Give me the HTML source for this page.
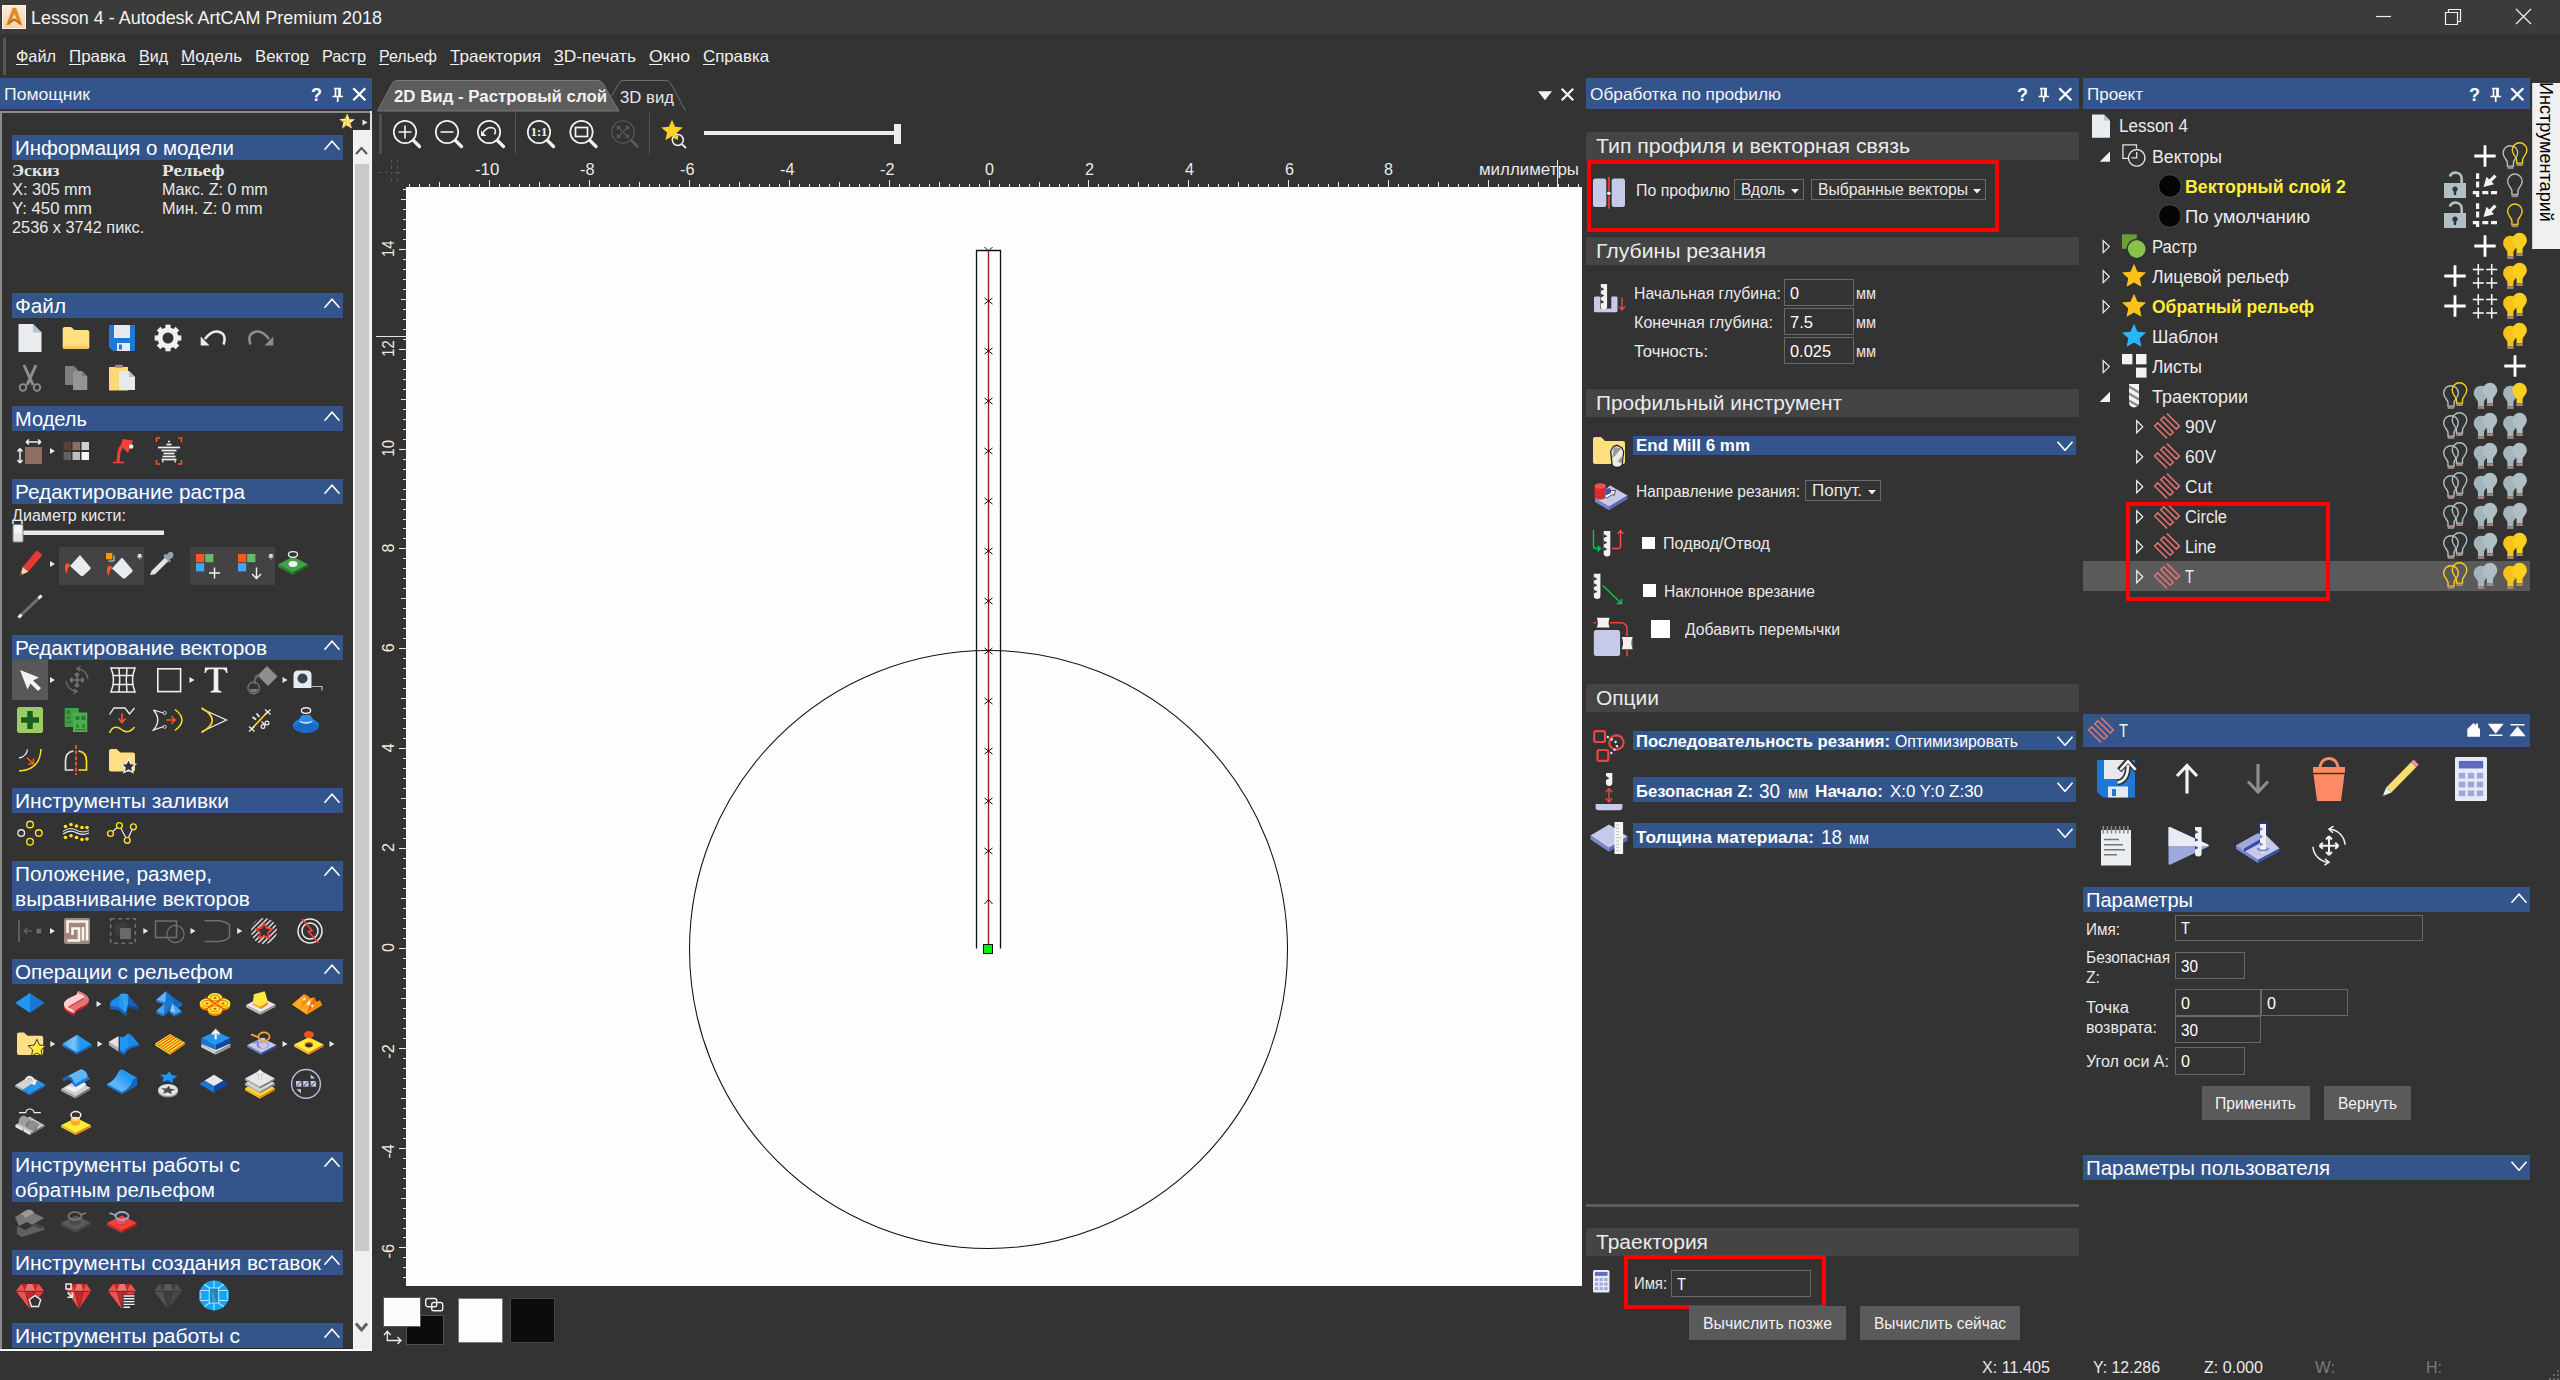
<!DOCTYPE html>
<html><head><meta charset="utf-8"><title>Lesson 4 - Autodesk ArtCAM Premium 2018</title><style>
html,body{margin:0;padding:0;}
body{width:2560px;height:1380px;overflow:hidden;background:#333333;position:relative;font-family:"Liberation Sans",sans-serif;}
.a{position:absolute;display:block;}
.t{position:absolute;white-space:nowrap;line-height:1;transform-origin:0 50%;font-family:"Liberation Sans",sans-serif;}
u{text-decoration-thickness:1px;text-underline-offset:1.5px;}
</style></head>
<body>
<div class="a" style="left:0px;top:0px;width:2560px;height:34px;background:#3b3b3b;"></div>
<svg class="a" style="left:2px;top:5px;" width="24" height="24" viewBox="0 0 24 24"><defs><linearGradient id="gai" x1="0" y1="0" x2="0" y2="1"><stop offset="0" stop-color="#fbe9d6"/><stop offset="1" stop-color="#f6d2ae"/></linearGradient></defs><rect x="0" y="0" width="24" height="24" fill="#fdf3e8"/><rect x="1" y="1" width="22" height="22" fill="url(#gai)"/><path d="M4 20.5 L10.8 2.8 L14 2.8 L20.5 20.5 L16.5 19.3 L12.3 8.5 L8 19.5 Z" fill="#e08a25"/><path d="M6.5 17 L12.2 13.3 L18 17 L18.5 19.5 L12.2 15.8 L6 19.5Z" fill="#b9661a"/></svg>
<span id="t1" class="t" style="left:31px;top:8.57px;font-size:18.7px;color:#f4f4f4;transform:scaleX(0.9600);">Lesson 4 - Autodesk ArtCAM Premium 2018</span>
<svg class="a" style="left:2375px;top:8px;" width="170" height="18" viewBox="0 0 170 18"><path d="M1 8.5 H16" stroke="#eee" stroke-width="1.2"/><path d="M70.5 4.5 H82.5 V16.5 H70.5Z M73.5 4.5 V1.5 H85.5 V13.5 H82.5" stroke="#eee" stroke-width="1.2" fill="none"/><path d="M141 1 L156 16 M156 1 L141 16" stroke="#eee" stroke-width="1.3"/></svg>
<div class="a" style="left:3px;top:38px;width:3px;height:37px;background:#555;"></div>
<span id="t2" class="t" style="left:16px;top:47.94px;font-size:16.5px;color:#f0f0f0;transform:scaleX(0.9858);"><u>Ф</u>айл</span>
<span id="t3" class="t" style="left:69px;top:47.94px;font-size:16.5px;color:#f0f0f0;transform:scaleX(1.0224);"><u>П</u>равка</span>
<span id="t4" class="t" style="left:139px;top:47.94px;font-size:16.5px;color:#f0f0f0;transform:scaleX(0.9707);"><u>В</u>ид</span>
<span id="t5" class="t" style="left:181px;top:47.94px;font-size:16.5px;color:#f0f0f0;transform:scaleX(1.0298);"><u>М</u>одель</span>
<span id="t6" class="t" style="left:255px;top:47.94px;font-size:16.5px;color:#f0f0f0;transform:scaleX(1.0126);">Векто<u>р</u></span>
<span id="t7" class="t" style="left:322px;top:47.94px;font-size:16.5px;color:#f0f0f0;transform:scaleX(0.9856);">Раст<u>р</u></span>
<span id="t8" class="t" style="left:379px;top:47.94px;font-size:16.5px;color:#f0f0f0;transform:scaleX(0.9684);"><u>Р</u>ельеф</span>
<span id="t9" class="t" style="left:450px;top:47.94px;font-size:16.5px;color:#f0f0f0;transform:scaleX(1.0345);"><u>Т</u>раектория</span>
<span id="t10" class="t" style="left:554px;top:47.94px;font-size:16.5px;color:#f0f0f0;transform:scaleX(1.0549);"><u>3</u>D-печать</span>
<span id="t11" class="t" style="left:649px;top:47.94px;font-size:16.5px;color:#f0f0f0;transform:scaleX(1.0688);"><u>О</u>кно</span>
<span id="t12" class="t" style="left:703px;top:47.94px;font-size:16.5px;color:#f0f0f0;transform:scaleX(1.0196);"><u>С</u>правка</span>
<div class="a" style="left:0px;top:78px;width:372px;height:31px;background:#34558b;"></div>
<span id="t13" class="t" style="left:4px;top:86.44px;font-size:16.5px;color:#f4f4f4;transform:scaleX(1.0658);">Помощник</span>
<span id="t14" class="t" style="left:311px;top:85.71px;font-size:18px;color:#fff;font-weight:bold;">?</span>
<svg class="a" style="left:331px;top:86.5px;" width="14" height="16" viewBox="0 0 14 16"><path d="M3 1.5 H10 M4.5 1.5 V9 M9 1.5 V9 M8 1.5 V9 M1.5 9.5 H12 M6.7 10 V15" stroke="#fff" stroke-width="1.7" fill="none"/></svg>
<svg class="a" style="left:352px;top:87.2px;" width="15" height="15" viewBox="0 0 15 15"><path d="M1.3 1.3 L13.3 13.3 M13.3 1.3 L1.3 13.3" stroke="#fff" stroke-width="2.3"/></svg>
<div class="a" style="left:0px;top:111px;width:372px;height:2px;background:#8c8c8c;"></div>
<div class="a" style="left:0px;top:111px;width:2px;height:1240px;background:#8c8c8c;"></div>
<div class="a" style="left:2px;top:1348px;width:351px;height:1px;background:#242424;"></div>
<div class="a" style="left:0px;top:1349px;width:372px;height:2px;background:#fafafa;"></div>
<div class="a" style="left:353px;top:130px;width:19px;height:1220px;background:#fbfbfb;"></div>
<div class="a" style="left:354px;top:130px;width:17px;height:1219px;background:#f0f0f0;"></div>
<div class="a" style="left:355px;top:164px;width:14px;height:1087px;background:#c9c9c9;"></div>
<svg class="a" style="left:355px;top:146px;" width="13" height="9" viewBox="0 0 13 9"><path d="M1 8 L6.5 2 L12 8" stroke="#555" stroke-width="2" fill="none"/></svg>
<svg class="a" style="left:355px;top:1322px;" width="13" height="11" viewBox="0 0 13 11"><path d="M1 1.5 L6.5 8 L12 1.5" stroke="#606060" stroke-width="3" fill="none"/></svg>
<div class="a" style="left:370px;top:111px;width:2px;height:19px;background:#e0e0e0;"></div>
<svg class="a" style="left:339px;top:113px;" width="16" height="16" viewBox="0 0 16 16"><path d="M8 0.5 L10.2 5.8 L15.8 6.2 L11.5 9.8 L12.9 15.4 L8 12.3 L3.1 15.4 L4.5 9.8 L0.2 6.2 L5.8 5.8Z" fill="#f0c23c"/><path d="M8 0.5 L10.2 5.8 L8 8Z M15.8 6.2 L11.5 9.8 L8 8Z M12.9 15.4 L8 12.3 L8 8Z M3.1 15.4 L4.5 9.8 L8 8Z M0.2 6.2 L5.8 5.8 L8 8Z" fill="#fff3c0"/></svg>
<svg class="a" style="left:362px;top:119px;" width="6" height="7" viewBox="0 0 6 7"><path d="M0.5 0.5 L5.5 3.5 L0.5 6.5Z" fill="#e8e8e8"/></svg>
<div class="a" style="left:12px;top:135px;width:331px;height:25px;background:#34558b;"></div>
<span id="t15" class="t" style="left:15px;top:138.49px;font-size:20.5px;color:#fff;transform:scaleX(0.9979);">Информация о модели</span>
<svg class="a" style="left:323px;top:140.3px;" width="18" height="10" viewBox="0 0 18 10"><path d="M1.5 9.7 L9 1.2 L16.5 9.7" stroke="#fff" stroke-width="1.6" fill="none"/></svg>
<span id="t16" class="t" style="left:12px;top:162.94px;font-size:16.5px;color:#e4e4e4;font-weight:bold;font-family:'Liberation Serif',serif;transform:scaleX(1.0753);">Эскиз</span>
<span id="t17" class="t" style="left:161.5px;top:162.94px;font-size:16.5px;color:#e4e4e4;font-weight:bold;font-family:'Liberation Serif',serif;transform:scaleX(1.1551);">Рельеф</span>
<span id="t18" class="t" style="left:12px;top:181.68px;font-size:16px;color:#e9e9e9;transform:scaleX(1.0277);">X: 305 mm</span>
<span id="t19" class="t" style="left:161.5px;top:181.68px;font-size:16px;color:#e9e9e9;transform:scaleX(1.0053);">Макс. Z: 0 mm</span>
<span id="t20" class="t" style="left:12px;top:200.68px;font-size:16px;color:#e9e9e9;transform:scaleX(1.0460);">Y: 450 mm</span>
<span id="t21" class="t" style="left:161.5px;top:200.68px;font-size:16px;color:#e9e9e9;transform:scaleX(1.0187);">Мин. Z: 0 mm</span>
<span id="t22" class="t" style="left:12px;top:219.68px;font-size:16px;color:#e9e9e9;transform:scaleX(1.0197);">2536 x 3742 пикс.</span>
<div class="a" style="left:12px;top:293px;width:331px;height:25px;background:#34558b;"></div>
<span id="t23" class="t" style="left:15px;top:296.49px;font-size:20.5px;color:#fff;transform:scaleX(1.0118);">Файл</span>
<svg class="a" style="left:323px;top:298.3px;" width="18" height="10" viewBox="0 0 18 10"><path d="M1.5 9.7 L9 1.2 L16.5 9.7" stroke="#fff" stroke-width="1.6" fill="none"/></svg>
<div class="a" style="left:12px;top:406px;width:331px;height:25px;background:#34558b;"></div>
<span id="t24" class="t" style="left:15px;top:409.49px;font-size:20.5px;color:#fff;transform:scaleX(0.9783);">Модель</span>
<svg class="a" style="left:323px;top:411.3px;" width="18" height="10" viewBox="0 0 18 10"><path d="M1.5 9.7 L9 1.2 L16.5 9.7" stroke="#fff" stroke-width="1.6" fill="none"/></svg>
<div class="a" style="left:12px;top:479px;width:331px;height:25px;background:#34558b;"></div>
<span id="t25" class="t" style="left:15px;top:482.49px;font-size:20.5px;color:#fff;transform:scaleX(1.0127);">Редактирование растра</span>
<svg class="a" style="left:323px;top:484.3px;" width="18" height="10" viewBox="0 0 18 10"><path d="M1.5 9.7 L9 1.2 L16.5 9.7" stroke="#fff" stroke-width="1.6" fill="none"/></svg>
<span id="t26" class="t" style="left:12px;top:507.68px;font-size:16px;color:#e9e9e9;transform:scaleX(1.0057);">Диаметр кисти:</span>
<div class="a" style="left:12px;top:635px;width:331px;height:25px;background:#34558b;"></div>
<span id="t27" class="t" style="left:15px;top:638.49px;font-size:20.5px;color:#fff;transform:scaleX(1.0187);">Редактирование векторов</span>
<svg class="a" style="left:323px;top:640.3px;" width="18" height="10" viewBox="0 0 18 10"><path d="M1.5 9.7 L9 1.2 L16.5 9.7" stroke="#fff" stroke-width="1.6" fill="none"/></svg>
<div class="a" style="left:12px;top:788px;width:331px;height:25px;background:#34558b;"></div>
<span id="t28" class="t" style="left:15px;top:791.49px;font-size:20.5px;color:#fff;transform:scaleX(1.0237);">Инструменты заливки</span>
<svg class="a" style="left:323px;top:793.3px;" width="18" height="10" viewBox="0 0 18 10"><path d="M1.5 9.7 L9 1.2 L16.5 9.7" stroke="#fff" stroke-width="1.6" fill="none"/></svg>
<div class="a" style="left:12px;top:861px;width:331px;height:50px;background:#34558b;"></div>
<span id="t29" class="t" style="left:15px;top:864.49px;font-size:20.5px;color:#fff;transform:scaleX(1.0139);">Положение, размер,</span>
<span id="t30" class="t" style="left:15px;top:889.49px;font-size:20.5px;color:#fff;transform:scaleX(1.0238);">выравнивание векторов</span>
<svg class="a" style="left:323px;top:866.3px;" width="18" height="10" viewBox="0 0 18 10"><path d="M1.5 9.7 L9 1.2 L16.5 9.7" stroke="#fff" stroke-width="1.6" fill="none"/></svg>
<div class="a" style="left:12px;top:959px;width:331px;height:25px;background:#34558b;"></div>
<span id="t31" class="t" style="left:15px;top:962.49px;font-size:20.5px;color:#fff;transform:scaleX(1.0090);">Операции с рельефом</span>
<svg class="a" style="left:323px;top:964.3px;" width="18" height="10" viewBox="0 0 18 10"><path d="M1.5 9.7 L9 1.2 L16.5 9.7" stroke="#fff" stroke-width="1.6" fill="none"/></svg>
<div class="a" style="left:12px;top:1152px;width:331px;height:50px;background:#34558b;"></div>
<span id="t32" class="t" style="left:15px;top:1155.49px;font-size:20.5px;color:#fff;transform:scaleX(1.0270);">Инструменты работы с</span>
<span id="t33" class="t" style="left:15px;top:1180.49px;font-size:20.5px;color:#fff;transform:scaleX(1.0037);">обратным рельефом</span>
<svg class="a" style="left:323px;top:1157.3px;" width="18" height="10" viewBox="0 0 18 10"><path d="M1.5 9.7 L9 1.2 L16.5 9.7" stroke="#fff" stroke-width="1.6" fill="none"/></svg>
<div class="a" style="left:12px;top:1250px;width:331px;height:25px;background:#34558b;"></div>
<span id="t34" class="t" style="left:15px;top:1253.49px;font-size:20.5px;color:#fff;transform:scaleX(1.0215);">Инструменты создания вставок</span>
<svg class="a" style="left:323px;top:1255.3px;" width="18" height="10" viewBox="0 0 18 10"><path d="M1.5 9.7 L9 1.2 L16.5 9.7" stroke="#fff" stroke-width="1.6" fill="none"/></svg>
<div class="a" style="left:12px;top:1323px;width:331px;height:25px;background:#34558b;"></div>
<span id="t35" class="t" style="left:15px;top:1326.49px;font-size:20.5px;color:#fff;transform:scaleX(1.0270);">Инструменты работы с</span>
<svg class="a" style="left:323px;top:1328.3px;" width="18" height="10" viewBox="0 0 18 10"><path d="M1.5 9.7 L9 1.2 L16.5 9.7" stroke="#fff" stroke-width="1.6" fill="none"/></svg>
<svg class="a" style="left:376px;top:79px;" width="320" height="33" viewBox="0 0 320 33"><path d="M1.5 32 L16.5 4 Q18 1.5 21 1.5 L222 1.5 Q225 1.5 226.5 4 L243 32 Z" fill="#5c5c5c" stroke="#7a7a7a" stroke-width="1"/><path d="M235.5 17 L243 4 Q244.5 1.5 247 1.5 L290 1.5 Q293 1.5 294.5 4 L309.5 32" fill="none" stroke="#6e6e6e" stroke-width="1"/></svg>
<span id="t36" class="t" style="left:394px;top:88.68px;font-size:16px;color:#f2f2f2;font-weight:bold;transform:scaleX(1.0516);">2D Вид - Растровый слой</span>
<span id="t37" class="t" style="left:620px;top:88.54px;font-size:16.3px;color:#e6e6e6;transform:scaleX(1.0267);">3D вид</span>
<svg class="a" style="left:1538px;top:91px;" width="14" height="10" viewBox="0 0 14 10"><path d="M0 0.3 H14 L7 9.3Z" fill="#f2f2f2"/></svg>
<svg class="a" style="left:1560px;top:87px;" width="15" height="15" viewBox="0 0 15 15"><path d="M1.7 1.8 L13.2 13.3 M13.2 1.8 L1.7 13.3" stroke="#f2f2f2" stroke-width="2.3"/></svg>
<div class="a" style="left:379px;top:114px;width:3px;height:40px;background:#4e4e4e;"></div>
<div class="a" style="left:515px;top:113px;width:1px;height:42px;background:#555;"></div>
<div class="a" style="left:649px;top:113px;width:1px;height:42px;background:#555;"></div>
<div class="a" style="left:704px;top:131px;width:192px;height:4px;background:#ececec;"></div>
<div class="a" style="left:894px;top:124px;width:7px;height:20px;background:#ececec;"></div>
<div class="a" style="left:406px;top:187px;width:1176px;height:1099px;background:#fdfdfd;"></div>
<svg class="a" style="left:0px;top:0px;pointer-events:none" width="1600" height="1300" viewBox="0 0 1600 1300"><path d="M409.5 184 V187 M419.5 184 V187 M429.5 184 V187 M439.5 182 V187 M449.5 184 V187 M459.5 184 V187 M469.5 184 V187 M479.5 184 V187 M489.5 180 V187 M499.5 184 V187 M509.5 184 V187 M519.5 184 V187 M529.5 184 V187 M539.5 182 V187 M549.5 184 V187 M559.5 184 V187 M569.5 184 V187 M579.5 184 V187 M589.5 180 V187 M599.5 184 V187 M609.5 184 V187 M619.5 184 V187 M629.5 184 V187 M639.5 182 V187 M649.5 184 V187 M659.5 184 V187 M669.5 184 V187 M679.5 184 V187 M689.5 180 V187 M699.5 184 V187 M709.5 184 V187 M719.5 184 V187 M729.5 184 V187 M739.5 182 V187 M749.5 184 V187 M759.5 184 V187 M769.5 184 V187 M779.5 184 V187 M789.5 180 V187 M799.5 184 V187 M809.5 184 V187 M819.5 184 V187 M829.5 184 V187 M839.5 182 V187 M849.5 184 V187 M859.5 184 V187 M869.5 184 V187 M879.5 184 V187 M889.5 180 V187 M899.5 184 V187 M909.5 184 V187 M919.5 184 V187 M929.5 184 V187 M939.5 182 V187 M949.5 184 V187 M959.5 184 V187 M969.5 184 V187 M979.5 184 V187 M989.5 180 V187 M999.5 184 V187 M1009.5 184 V187 M1019.5 184 V187 M1029.5 184 V187 M1039.5 182 V187 M1049.5 184 V187 M1059.5 184 V187 M1068.5 184 V187 M1078.5 184 V187 M1088.5 180 V187 M1098.5 184 V187 M1108.5 184 V187 M1118.5 184 V187 M1128.5 184 V187 M1138.5 182 V187 M1148.5 184 V187 M1158.5 184 V187 M1168.5 184 V187 M1178.5 184 V187 M1188.5 180 V187 M1198.5 184 V187 M1208.5 184 V187 M1218.5 184 V187 M1228.5 184 V187 M1238.5 182 V187 M1248.5 184 V187 M1258.5 184 V187 M1268.5 184 V187 M1278.5 184 V187 M1288.5 180 V187 M1298.5 184 V187 M1308.5 184 V187 M1318.5 184 V187 M1328.5 184 V187 M1338.5 182 V187 M1348.5 184 V187 M1358.5 184 V187 M1368.5 184 V187 M1378.5 184 V187 M1388.5 180 V187 M1398.5 184 V187 M1408.5 184 V187 M1418.5 184 V187 M1428.5 184 V187 M1438.5 182 V187 M1448.5 184 V187 M1458.5 184 V187 M1468.5 184 V187 M1478.5 184 V187 M1488.5 180 V187 M1498.5 184 V187 M1508.5 184 V187 M1518.5 184 V187 M1528.5 184 V187 M1538.5 182 V187 M1548.5 184 V187 M1558.5 184 V187 M1568.5 184 V187 M1578.5 184 V187 M403 1277.5 H406 M403 1267.5 H406 M403 1257.5 H406 M399 1247.5 H406 M403 1237.5 H406 M403 1228.5 H406 M403 1218.5 H406 M403 1208.5 H406 M401 1198.5 H406 M403 1188.5 H406 M403 1178.5 H406 M403 1168.5 H406 M403 1158.5 H406 M399 1148.5 H406 M403 1138.5 H406 M403 1128.5 H406 M403 1118.5 H406 M403 1108.5 H406 M401 1098.5 H406 M403 1088.5 H406 M403 1078.5 H406 M403 1068.5 H406 M403 1058.5 H406 M399 1048.5 H406 M403 1038.5 H406 M403 1028.5 H406 M403 1018.5 H406 M403 1008.5 H406 M401 998.5 H406 M403 988.5 H406 M403 978.5 H406 M403 968.5 H406 M403 958.5 H406 M399 948.5 H406 M403 938.5 H406 M403 928.5 H406 M403 918.5 H406 M403 908.5 H406 M401 898.5 H406 M403 888.5 H406 M403 878.5 H406 M403 868.5 H406 M403 858.5 H406 M399 848.5 H406 M403 838.5 H406 M403 828.5 H406 M403 818.5 H406 M403 808.5 H406 M401 798.5 H406 M403 788.5 H406 M403 778.5 H406 M403 768.5 H406 M403 758.5 H406 M399 748.5 H406 M403 738.5 H406 M403 728.5 H406 M403 718.5 H406 M403 708.5 H406 M401 698.5 H406 M403 688.5 H406 M403 678.5 H406 M403 668.5 H406 M403 658.5 H406 M399 648.5 H406 M403 638.5 H406 M403 628.5 H406 M403 618.5 H406 M403 608.5 H406 M401 598.5 H406 M403 588.5 H406 M403 578.5 H406 M403 568.5 H406 M403 558.5 H406 M399 548.5 H406 M403 538.5 H406 M403 528.5 H406 M403 519.5 H406 M403 509.5 H406 M401 499.5 H406 M403 489.5 H406 M403 479.5 H406 M403 469.5 H406 M403 459.5 H406 M399 449.5 H406 M403 439.5 H406 M403 429.5 H406 M403 419.5 H406 M403 409.5 H406 M401 399.5 H406 M403 389.5 H406 M403 379.5 H406 M403 369.5 H406 M403 359.5 H406 M399 349.5 H406 M403 339.5 H406 M403 329.5 H406 M403 319.5 H406 M403 309.5 H406 M401 299.5 H406 M403 289.5 H406 M403 279.5 H406 M403 269.5 H406 M403 259.5 H406 M399 249.5 H406 M403 239.5 H406 M403 229.5 H406 M403 219.5 H406 M403 209.5 H406 M401 199.5 H406 M403 189.5 H406" stroke="#ededed" stroke-width="1" fill="none"/><path d="M1557.5 160 V187 M376 336.5 H406" stroke="#e4e4e4" stroke-width="1"/><path d="M379 172.5 H382 M385 172.5 H388 M394 172.5 H400 M391.5 160 V163 M391.5 166 V169 M391.5 172 V175 M391.5 178 V181 M397.5 160 V163 M397.5 166 V169 M397.5 172 V175 M397.5 178 V181" stroke="#555" stroke-width="1" fill="none"/></svg>
<span id="t38" class="t" style="left:475.35px;top:161.24px;font-size:16.5px;color:#ebebeb;transform:scaleX(1.0185);">-10</span>
<span id="t39" class="t" style="left:580.1099999999999px;top:161.24px;font-size:16.5px;color:#ebebeb;transform:scaleX(0.9883);">-8</span>
<span id="t40" class="t" style="left:679.97px;top:161.24px;font-size:16.5px;color:#ebebeb;transform:scaleX(0.9883);">-6</span>
<span id="t41" class="t" style="left:779.8299999999999px;top:161.24px;font-size:16.5px;color:#ebebeb;transform:scaleX(0.9883);">-4</span>
<span id="t42" class="t" style="left:879.6899999999999px;top:161.24px;font-size:16.5px;color:#ebebeb;transform:scaleX(0.9883);">-2</span>
<span id="t43" class="t" style="left:985.0px;top:161.24px;font-size:16.5px;color:#ebebeb;transform:scaleX(0.9796);">0</span>
<span id="t44" class="t" style="left:1084.86px;top:161.24px;font-size:16.5px;color:#ebebeb;transform:scaleX(0.9796);">2</span>
<span id="t45" class="t" style="left:1184.72px;top:161.24px;font-size:16.5px;color:#ebebeb;transform:scaleX(0.9796);">4</span>
<span id="t46" class="t" style="left:1284.58px;top:161.24px;font-size:16.5px;color:#ebebeb;transform:scaleX(0.9796);">6</span>
<span id="t47" class="t" style="left:1384.44px;top:161.24px;font-size:16.5px;color:#ebebeb;transform:scaleX(0.9796);">8</span>
<span id="t48" class="t" style="left:1479px;top:161.68px;font-size:16px;color:#e8e8e8;transform:scaleX(1.0566);">миллиметры</span>
<span class="t" style="left:0;top:0;width:0;height:0;transform:translate(388px,1251.5px) rotate(-90deg);transform-origin:0 0;"><span id="t49" class="t" style="left:-7.25px;top:-8.1px;font-size:16.5px;color:#f2e9df;transform:scaleX(0.9883);">-6</span></span>
<span class="t" style="left:0;top:0;width:0;height:0;transform:translate(388px,1151.6px) rotate(-90deg);transform-origin:0 0;"><span id="t50" class="t" style="left:-7.25px;top:-8.1px;font-size:16.5px;color:#f2e9df;transform:scaleX(0.9883);">-4</span></span>
<span class="t" style="left:0;top:0;width:0;height:0;transform:translate(388px,1051.8px) rotate(-90deg);transform-origin:0 0;"><span id="t51" class="t" style="left:-7.25px;top:-8.1px;font-size:16.5px;color:#f2e9df;transform:scaleX(0.9883);">-2</span></span>
<span class="t" style="left:0;top:0;width:0;height:0;transform:translate(388px,947.9px) rotate(-90deg);transform-origin:0 0;"><span id="t52" class="t" style="left:-4.50px;top:-8.1px;font-size:16.5px;color:#f2e9df;transform:scaleX(0.9796);">0</span></span>
<span class="t" style="left:0;top:0;width:0;height:0;transform:translate(388px,848.0px) rotate(-90deg);transform-origin:0 0;"><span id="t53" class="t" style="left:-4.50px;top:-8.1px;font-size:16.5px;color:#f2e9df;transform:scaleX(0.9796);">2</span></span>
<span class="t" style="left:0;top:0;width:0;height:0;transform:translate(388px,748.2px) rotate(-90deg);transform-origin:0 0;"><span id="t54" class="t" style="left:-4.50px;top:-8.1px;font-size:16.5px;color:#f2e9df;transform:scaleX(0.9796);">4</span></span>
<span class="t" style="left:0;top:0;width:0;height:0;transform:translate(388px,648.3px) rotate(-90deg);transform-origin:0 0;"><span id="t55" class="t" style="left:-4.50px;top:-8.1px;font-size:16.5px;color:#f2e9df;transform:scaleX(0.9796);">6</span></span>
<span class="t" style="left:0;top:0;width:0;height:0;transform:translate(388px,548.5px) rotate(-90deg);transform-origin:0 0;"><span id="t56" class="t" style="left:-4.50px;top:-8.1px;font-size:16.5px;color:#f2e9df;transform:scaleX(0.9796);">8</span></span>
<span class="t" style="left:0;top:0;width:0;height:0;transform:translate(388px,448.6px) rotate(-90deg);transform-origin:0 0;"><span id="t57" class="t" style="left:-8.25px;top:-8.1px;font-size:16.5px;color:#f2e9df;transform:scaleX(0.8987);">10</span></span>
<span class="t" style="left:0;top:0;width:0;height:0;transform:translate(388px,348.7px) rotate(-90deg);transform-origin:0 0;"><span id="t58" class="t" style="left:-8.25px;top:-8.1px;font-size:16.5px;color:#f2e9df;transform:scaleX(0.8987);">12</span></span>
<span class="t" style="left:0;top:0;width:0;height:0;transform:translate(388px,248.9px) rotate(-90deg);transform-origin:0 0;"><span id="t59" class="t" style="left:-8.25px;top:-8.1px;font-size:16.5px;color:#f2e9df;transform:scaleX(0.8987);">14</span></span>
<svg class="a" style="left:405px;top:187px;" width="1176" height="1099" viewBox="405 187 1176 1099"><circle cx="988.5" cy="949.5" r="299" fill="none" stroke="#111" stroke-width="1.05"/><path d="M976.5 948.5 V250.5 H1000.5 V948.5" fill="none" stroke="#111" stroke-width="1.3"/><path d="M988.5 250 V945" stroke="#a01818" stroke-width="1.4"/><path d="M984.5 298 L992.5 304 M984.5 304 L992.5 298 M984.5 348 L992.5 354 M984.5 354 L992.5 348 M984.5 398 L992.5 404 M984.5 404 L992.5 398 M984.5 448 L992.5 454 M984.5 454 L992.5 448 M984.5 498 L992.5 504 M984.5 504 L992.5 498 M984.5 548 L992.5 554 M984.5 554 L992.5 548 M984.5 598 L992.5 604 M984.5 604 L992.5 598 M984.5 648 L992.5 654 M984.5 654 L992.5 648 M984.5 698 L992.5 704 M984.5 704 L992.5 698 M984.5 748 L992.5 754 M984.5 754 L992.5 748 M984.5 798 L992.5 804 M984.5 804 L992.5 798 M984.5 848 L992.5 854 M984.5 854 L992.5 848  M984.5 247 L988.5 251 L992.5 247 M984.5 904 L988.5 899.5 L992.5 904" stroke="#111" stroke-width="1" fill="none"/><rect x="983.5" y="944.5" width="9" height="9" fill="#00f400" stroke="#111" stroke-width="1"/></svg>
<div class="a" style="left:406px;top:1315px;width:38px;height:30px;background:#0c0c0c;border:1px solid #505050;box-sizing:border-box;"></div>
<div class="a" style="left:383px;top:1297px;width:38px;height:30px;background:#fcfcfc;border:1px solid #5a5a5a;box-sizing:border-box;"></div>
<div class="a" style="left:458px;top:1298px;width:45px;height:45px;background:#fdfdfd;border:1px solid #777;box-sizing:border-box;"></div>
<div class="a" style="left:510px;top:1298px;width:45px;height:45px;background:#0c0c0c;border:1px solid #444;box-sizing:border-box;"></div>
<svg class="a" style="left:424px;top:1296px;" width="20" height="16" viewBox="0 0 20 16"><rect x="1.7" y="2.5" width="11" height="8.2" rx="2" fill="none" stroke="#eee" stroke-width="1.4"/><rect x="7.7" y="6.5" width="11" height="8.2" rx="2" fill="none" stroke="#eee" stroke-width="1.4"/></svg>
<svg class="a" style="left:383px;top:1329px;" width="20" height="17" viewBox="0 0 20 17"><path d="M4.3 2.5 V11.5 H18 M1 6 L4.3 2.2 L7.6 6 M14.5 8 L18 11.5 L14.5 15" stroke="#eee" stroke-width="1.3" fill="none"/></svg>
<div class="a" style="left:1586px;top:78px;width:493px;height:31px;background:#34558b;"></div>
<span id="t60" class="t" style="left:1590px;top:86.44px;font-size:16.5px;color:#f4f4f4;transform:scaleX(1.0460);">Обработка по профилю</span>
<span id="t61" class="t" style="left:2017px;top:85.71px;font-size:18px;color:#fff;font-weight:bold;">?</span>
<svg class="a" style="left:2037px;top:86.5px;" width="14" height="16" viewBox="0 0 14 16"><path d="M3 1.5 H10 M4.5 1.5 V9 M9 1.5 V9 M8 1.5 V9 M1.5 9.5 H12 M6.7 10 V15" stroke="#fff" stroke-width="1.7" fill="none"/></svg>
<svg class="a" style="left:2058px;top:87.2px;" width="15" height="15" viewBox="0 0 15 15"><path d="M1.3 1.3 L13.3 13.3 M13.3 1.3 L1.3 13.3" stroke="#fff" stroke-width="2.3"/></svg>
<div class="a" style="left:1586px;top:132px;width:493px;height:28px;background:#444444;"></div>
<span id="t62" class="t" style="left:1596px;top:136.49px;font-size:20.5px;color:#ebebeb;transform:scaleX(1.0369);">Тип профиля и векторная связь</span>
<span id="t63" class="t" style="left:1636px;top:182.68px;font-size:16px;color:#e9e9e9;transform:scaleX(0.9921);">По профилю</span>
<div class="a" style="left:1734px;top:179px;width:68px;height:19px;border:1px solid #6a6a6a;background:transparent;"></div>
<span id="t64" class="t" style="left:1741px;top:182.18px;font-size:16px;color:#e9e9e9;transform:scaleX(0.9555);">Вдоль</span>
<svg class="a" style="left:1791px;top:188.5px;" width="8" height="5" viewBox="0 0 8 5"><path d="M0 0 H8 L4 4.5Z" fill="#f0f0f0"/></svg>
<div class="a" style="left:1811px;top:179px;width:173px;height:19px;border:1px solid #6a6a6a;background:transparent;"></div>
<span id="t65" class="t" style="left:1818px;top:182.18px;font-size:16px;color:#e9e9e9;transform:scaleX(0.9836);">Выбранные векторы</span>
<svg class="a" style="left:1973px;top:188.5px;" width="8" height="5" viewBox="0 0 8 5"><path d="M0 0 H8 L4 4.5Z" fill="#f0f0f0"/></svg>
<div class="a" style="left:1586px;top:237px;width:493px;height:28px;background:#444444;"></div>
<span id="t66" class="t" style="left:1596px;top:241.49px;font-size:20.5px;color:#ebebeb;transform:scaleX(1.0342);">Глубины резания</span>
<span id="t67" class="t" style="left:1634px;top:285.68px;font-size:16px;color:#e9e9e9;transform:scaleX(0.9856);">Начальная глубина:</span>
<span id="t68" class="t" style="left:1634px;top:314.68px;font-size:16px;color:#e9e9e9;transform:scaleX(1.0080);">Конечная глубина:</span>
<span id="t69" class="t" style="left:1634px;top:343.68px;font-size:16px;color:#e9e9e9;transform:scaleX(1.0386);">Точность:</span>
<div class="a" style="left:1784px;top:279px;width:68px;height:25px;border:1px solid #686868;background:transparent;"></div>
<span id="t70" class="t" style="left:1790px;top:285.68px;font-size:16px;color:#fff;transform:scaleX(1.0105);">0</span>
<div class="a" style="left:1784px;top:308px;width:68px;height:25px;border:1px solid #686868;background:transparent;"></div>
<span id="t71" class="t" style="left:1790px;top:314.68px;font-size:16px;color:#fff;transform:scaleX(1.0337);">7.5</span>
<div class="a" style="left:1784px;top:337px;width:68px;height:25px;border:1px solid #686868;background:transparent;"></div>
<span id="t72" class="t" style="left:1790px;top:343.68px;font-size:16px;color:#fff;transform:scaleX(1.0238);">0.025</span>
<span id="t73" class="t" style="left:1856px;top:285.68px;font-size:16px;color:#e9e9e9;transform:scaleX(0.9091);">мм</span>
<span id="t74" class="t" style="left:1856px;top:314.68px;font-size:16px;color:#e9e9e9;transform:scaleX(0.9091);">мм</span>
<span id="t75" class="t" style="left:1856px;top:343.68px;font-size:16px;color:#e9e9e9;transform:scaleX(0.9091);">мм</span>
<div class="a" style="left:1586px;top:389px;width:493px;height:28px;background:#444444;"></div>
<span id="t76" class="t" style="left:1596px;top:393.49px;font-size:20.5px;color:#ebebeb;transform:scaleX(1.0186);">Профильный инструмент</span>
<div class="a" style="left:1633px;top:436px;width:443px;height:19px;background:#34558b;"></div>
<svg class="a" style="left:2056px;top:441px;" width="18" height="10" viewBox="0 0 18 10"><path d="M1.5 0.8 L9 9.3 L16.5 0.8" stroke="#fff" stroke-width="1.6" fill="none"/></svg>
<span id="t77" class="t" style="left:1636px;top:438.18px;font-size:16px;color:#fff;font-weight:bold;transform:scaleX(1.0597);">End Mill 6 mm</span>
<span id="t78" class="t" style="left:1636px;top:483.68px;font-size:16px;color:#e9e9e9;transform:scaleX(0.9706);">Направление резания:</span>
<div class="a" style="left:1805px;top:480px;width:74px;height:19px;border:1px solid #6a6a6a;background:transparent;"></div>
<span id="t79" class="t" style="left:1812px;top:483.18px;font-size:16px;color:#e9e9e9;transform:scaleX(1.0624);">Попут.</span>
<svg class="a" style="left:1868px;top:489.5px;" width="8" height="5" viewBox="0 0 8 5"><path d="M0 0 H8 L4 4.5Z" fill="#f0f0f0"/></svg>
<div class="a" style="left:1642px;top:537px;width:13px;height:12px;background:#fff;"></div>
<span id="t80" class="t" style="left:1663px;top:535.68px;font-size:16px;color:#e9e9e9;transform:scaleX(1.0093);">Подвод/Отвод</span>
<div class="a" style="left:1643px;top:584px;width:13px;height:13px;background:#fff;"></div>
<span id="t81" class="t" style="left:1664px;top:583.68px;font-size:16px;color:#e9e9e9;transform:scaleX(0.9754);">Наклонное врезание</span>
<div class="a" style="left:1651px;top:620px;width:19px;height:18px;background:#fff;"></div>
<span id="t82" class="t" style="left:1685px;top:621.68px;font-size:16px;color:#e9e9e9;transform:scaleX(0.9854);">Добавить перемычки</span>
<div class="a" style="left:1586px;top:684px;width:493px;height:28px;background:#444444;"></div>
<span id="t83" class="t" style="left:1596px;top:688.49px;font-size:20.5px;color:#ebebeb;transform:scaleX(1.0210);">Опции</span>
<div class="a" style="left:1633px;top:731px;width:443px;height:19px;background:#34558b;"></div>
<svg class="a" style="left:2056px;top:736px;" width="18" height="10" viewBox="0 0 18 10"><path d="M1.5 0.8 L9 9.3 L16.5 0.8" stroke="#fff" stroke-width="1.6" fill="none"/></svg>
<span id="t84" class="t" style="left:1636px;top:733.68px;font-size:16px;color:#fff;font-weight:bold;transform:scaleX(1.0422);">Последовательность резания:</span>
<span id="t85" class="t" style="left:1895px;top:733.68px;font-size:16px;color:#fff;transform:scaleX(0.9926);">Оптимизировать</span>
<div class="a" style="left:1633px;top:777px;width:443px;height:25px;background:#34558b;"></div>
<svg class="a" style="left:2056px;top:782px;" width="18" height="10" viewBox="0 0 18 10"><path d="M1.5 0.8 L9 9.3 L16.5 0.8" stroke="#fff" stroke-width="1.6" fill="none"/></svg>
<span id="t86" class="t" style="left:1636px;top:784.18px;font-size:16px;color:#fff;font-weight:bold;transform:scaleX(1.0387);">Безопасная Z:</span>
<span id="t87" class="t" style="left:1759px;top:779.74px;font-size:21px;color:#fff;transform:scaleX(0.8990);">30</span>
<span id="t88" class="t" style="left:1788px;top:784.68px;font-size:16px;color:#fff;transform:scaleX(0.9091);">мм</span>
<span id="t89" class="t" style="left:1815px;top:784.18px;font-size:16px;color:#fff;font-weight:bold;transform:scaleX(1.0743);">Начало:</span>
<span id="t90" class="t" style="left:1890px;top:784.18px;font-size:16px;color:#fff;transform:scaleX(1.0596);">X:0 Y:0 Z:30</span>
<div class="a" style="left:1633px;top:823px;width:443px;height:25px;background:#34558b;"></div>
<svg class="a" style="left:2056px;top:828px;" width="18" height="10" viewBox="0 0 18 10"><path d="M1.5 0.8 L9 9.3 L16.5 0.8" stroke="#fff" stroke-width="1.6" fill="none"/></svg>
<span id="t91" class="t" style="left:1636px;top:830.18px;font-size:16px;color:#fff;font-weight:bold;transform:scaleX(1.0800);">Толщина материала:</span>
<span id="t92" class="t" style="left:1821px;top:825.74px;font-size:21px;color:#fff;transform:scaleX(0.8990);">18</span>
<span id="t93" class="t" style="left:1849px;top:830.68px;font-size:16px;color:#fff;transform:scaleX(0.9091);">мм</span>
<div class="a" style="left:1586px;top:1204px;width:493px;height:3px;background:#5c5c5c;"></div>
<div class="a" style="left:1586px;top:1228px;width:493px;height:28px;background:#444444;"></div>
<span id="t94" class="t" style="left:1596px;top:1232.49px;font-size:20.5px;color:#ebebeb;transform:scaleX(1.0247);">Траектория</span>
<span id="t95" class="t" style="left:1634px;top:1276.18px;font-size:16px;color:#e9e9e9;transform:scaleX(0.9267);">Имя:</span>
<div class="a" style="left:1671px;top:1270px;width:138px;height:25px;border:1px solid #686868;background:transparent;"></div>
<span id="t96" class="t" style="left:1677px;top:1276.68px;font-size:16px;color:#fff;transform:scaleX(0.9201);">T</span>
<div class="a" style="left:1624px;top:1255px;width:194px;height:46px;border:4px solid #ff0000;background:transparent;"></div>
<div class="a" style="left:1689px;top:1306px;width:157px;height:34px;background:#5a5a5a;"></div>
<span id="t97" class="t" style="left:1703px;top:1316.18px;font-size:16px;color:#f2f2f2;transform:scaleX(0.9911);">Вычислить позже</span>
<div class="a" style="left:1860px;top:1306px;width:160px;height:34px;background:#5a5a5a;"></div>
<span id="t98" class="t" style="left:1874px;top:1316.18px;font-size:16px;color:#f2f2f2;transform:scaleX(0.9642);">Вычислить сейчас</span>
<span id="t99" class="t" style="left:1982px;top:1359.78px;font-size:16px;color:#e9e9e9;transform:scaleX(1.0102);">X: 11.405</span>
<span id="t100" class="t" style="left:2093px;top:1359.78px;font-size:16px;color:#e9e9e9;transform:scaleX(0.9908);">Y: 12.286</span>
<span id="t101" class="t" style="left:2204px;top:1359.78px;font-size:16px;color:#e9e9e9;transform:scaleX(1.0051);">Z: 0.000</span>
<span id="t102" class="t" style="left:2315px;top:1359.78px;font-size:16px;color:#7a7a7a;transform:scaleX(1.0381);">W:</span>
<span id="t103" class="t" style="left:2426px;top:1359.78px;font-size:16px;color:#7a7a7a;transform:scaleX(1.0000);">H:</span>
<svg class="a" style="left:2548px;top:1368px;" width="12" height="12" viewBox="0 0 12 12"><path d="M9 2h2v2h-2z M5 6h2v2h-2z M9 6h2v2h-2z M1 10h2v2h-2z M5 10h2v2h-2z M9 10h2v2h-2z" fill="#666"/></svg>
<div class="a" style="left:2083px;top:78px;width:447px;height:31px;background:#34558b;"></div>
<span id="t104" class="t" style="left:2087px;top:86.44px;font-size:16.5px;color:#f4f4f4;transform:scaleX(1.0302);">Проект</span>
<span id="t105" class="t" style="left:2469px;top:85.71px;font-size:18px;color:#fff;font-weight:bold;">?</span>
<svg class="a" style="left:2489px;top:86.5px;" width="14" height="16" viewBox="0 0 14 16"><path d="M3 1.5 H10 M4.5 1.5 V9 M9 1.5 V9 M8 1.5 V9 M1.5 9.5 H12 M6.7 10 V15" stroke="#fff" stroke-width="1.7" fill="none"/></svg>
<svg class="a" style="left:2510px;top:87.2px;" width="15" height="15" viewBox="0 0 15 15"><path d="M1.3 1.3 L13.3 13.3 M13.3 1.3 L1.3 13.3" stroke="#fff" stroke-width="2.3"/></svg>
<div class="a" style="left:2532px;top:83px;width:28px;height:166px;background:#f0f0f0;"></div>
<div class="a" style="left:2532px;top:83px;width:1px;height:166px;background:#cfcfcf;"></div>
<span class="t" style="left:2546px;top:81.5px;font-size:18px;color:#000;transform:rotate(90deg) scaleX(1.005);transform-origin:0 50%;line-height:0;">Инструментарий</span>
<div class="a" style="left:2083px;top:561px;width:447px;height:30px;background:#5a5a5a;"></div>
<span id="t106" class="t" style="left:2119px;top:117.95px;font-size:17.5px;color:#ececec;transform:scaleX(0.9714);">Lesson 4</span>
<span id="t107" class="t" style="left:2152px;top:148.95px;font-size:17.5px;color:#ececec;transform:scaleX(1.0127);">Векторы</span>
<span id="t108" class="t" style="left:2185px;top:178.95px;font-size:17.5px;color:#ffee3a;font-weight:bold;transform:scaleX(1.0148);">Векторный слой 2</span>
<span id="t109" class="t" style="left:2185px;top:208.95px;font-size:17.5px;color:#ececec;transform:scaleX(1.0561);">По умолчанию</span>
<span id="t110" class="t" style="left:2152px;top:238.95px;font-size:17.5px;color:#ececec;transform:scaleX(0.9508);">Растр</span>
<span id="t111" class="t" style="left:2152px;top:268.95px;font-size:17.5px;color:#ececec;transform:scaleX(1.0026);">Лицевой рельеф</span>
<span id="t112" class="t" style="left:2152px;top:298.95px;font-size:17.5px;color:#ffee3a;font-weight:bold;transform:scaleX(1.0006);">Обратный рельеф</span>
<span id="t113" class="t" style="left:2152px;top:328.95px;font-size:17.5px;color:#ececec;transform:scaleX(1.0181);">Шаблон</span>
<span id="t114" class="t" style="left:2152px;top:358.95px;font-size:17.5px;color:#ececec;transform:scaleX(0.9880);">Листы</span>
<span id="t115" class="t" style="left:2152px;top:388.95px;font-size:17.5px;color:#ececec;transform:scaleX(1.0257);">Траектории</span>
<span id="t116" class="t" style="left:2185px;top:418.95px;font-size:17.5px;color:#ececec;transform:scaleX(0.9955);">90V</span>
<span id="t117" class="t" style="left:2185px;top:448.95px;font-size:17.5px;color:#ececec;transform:scaleX(0.9955);">60V</span>
<span id="t118" class="t" style="left:2185px;top:478.95px;font-size:17.5px;color:#ececec;transform:scaleX(0.9914);">Cut</span>
<span id="t119" class="t" style="left:2185px;top:508.95px;font-size:17.5px;color:#ececec;transform:scaleX(0.9389);">Circle</span>
<span id="t120" class="t" style="left:2185px;top:538.95px;font-size:17.5px;color:#ececec;transform:scaleX(0.9367);">Line</span>
<span id="t121" class="t" style="left:2185px;top:568.95px;font-size:17.5px;color:#ececec;transform:scaleX(0.8409);">T</span>
<div class="a" style="left:2083px;top:714px;width:447px;height:33px;background:#34558b;"></div>
<span id="t122" class="t" style="left:2119px;top:723.45px;font-size:17.5px;color:#f4f4f4;transform:scaleX(0.8409);">T</span>
<div class="a" style="left:2083px;top:887px;width:447px;height:25px;background:#34558b;"></div>
<span id="t123" class="t" style="left:2086px;top:890.49px;font-size:20.5px;color:#fff;transform:scaleX(0.9791);">Параметры</span>
<svg class="a" style="left:2510px;top:893px;" width="18" height="10" viewBox="0 0 18 10"><path d="M1.5 9.7 L9 1.2 L16.5 9.7" stroke="#fff" stroke-width="1.6" fill="none"/></svg>
<span id="t124" class="t" style="left:2086px;top:922.18px;font-size:16px;color:#e9e9e9;transform:scaleX(0.9548);">Имя:</span>
<div class="a" style="left:2175px;top:915px;width:246px;height:24px;border:1px solid #686868;background:transparent;"></div>
<span id="t125" class="t" style="left:2181px;top:921.18px;font-size:16px;color:#fff;transform:scaleX(0.9201);">T</span>
<span id="t126" class="t" style="left:2086px;top:949.68px;font-size:16px;color:#e9e9e9;transform:scaleX(0.9648);">Безопасная</span>
<span id="t127" class="t" style="left:2086px;top:969.68px;font-size:16px;color:#e9e9e9;transform:scaleX(0.9846);">Z:</span>
<div class="a" style="left:2175px;top:952px;width:68px;height:25px;border:1px solid #686868;background:transparent;"></div>
<span id="t128" class="t" style="left:2181px;top:958.68px;font-size:16px;color:#fff;transform:scaleX(0.9552);">30</span>
<span id="t129" class="t" style="left:2086px;top:1000.18px;font-size:16px;color:#e9e9e9;transform:scaleX(1.0323);">Точка</span>
<span id="t130" class="t" style="left:2086px;top:1019.68px;font-size:16px;color:#e9e9e9;transform:scaleX(1.0026);">возврата:</span>
<div class="a" style="left:2175px;top:989px;width:84px;height:25px;border:1px solid #686868;background:transparent;"></div>
<span id="t131" class="t" style="left:2181px;top:995.68px;font-size:16px;color:#fff;transform:scaleX(1.0105);">0</span>
<div class="a" style="left:2261px;top:989px;width:85px;height:25px;border:1px solid #686868;background:transparent;"></div>
<span id="t132" class="t" style="left:2267px;top:995.68px;font-size:16px;color:#fff;transform:scaleX(1.0105);">0</span>
<div class="a" style="left:2175px;top:1016px;width:84px;height:25px;border:1px solid #686868;background:transparent;"></div>
<span id="t133" class="t" style="left:2181px;top:1022.68px;font-size:16px;color:#fff;transform:scaleX(0.9552);">30</span>
<span id="t134" class="t" style="left:2086px;top:1054.18px;font-size:16px;color:#e9e9e9;transform:scaleX(1.0042);">Угол оси A:</span>
<div class="a" style="left:2175px;top:1047px;width:68px;height:26px;border:1px solid #686868;background:transparent;"></div>
<span id="t135" class="t" style="left:2181px;top:1054.18px;font-size:16px;color:#fff;transform:scaleX(1.0105);">0</span>
<div class="a" style="left:2202px;top:1086px;width:108px;height:34px;background:#5a5a5a;"></div>
<span id="t136" class="t" style="left:2215px;top:1096.18px;font-size:16px;color:#f2f2f2;transform:scaleX(0.9798);">Применить</span>
<div class="a" style="left:2324px;top:1086px;width:87px;height:34px;background:#5a5a5a;"></div>
<span id="t137" class="t" style="left:2338px;top:1096.18px;font-size:16px;color:#f2f2f2;transform:scaleX(0.9677);">Вернуть</span>
<div class="a" style="left:2083px;top:1155px;width:447px;height:25px;background:#34558b;"></div>
<span id="t138" class="t" style="left:2086px;top:1158.49px;font-size:20.5px;color:#fff;transform:scaleX(0.9967);">Параметры пользователя</span>
<svg class="a" style="left:2510px;top:1161px;" width="18" height="10" viewBox="0 0 18 10"><path d="M1.5 0.8 L9 9.3 L16.5 0.8" stroke="#fff" stroke-width="1.6" fill="none"/></svg>
<svg class="a" style="left:0;top:0" width="2560" height="1380" viewBox="0 0 2560 1380"><g transform="translate(30 338) scale(1.0)"><path d="M-11.5 -14 H3 L11.5 -5.5 V14 H-11.5Z" fill="#e9edf0"/><path d="M3 -14 L11.5 -5.5 H3Z" fill="#b5c3cc"/></g>
<g transform="translate(76 338) scale(1.0)"><path d="M-13.3 -9 Q-13.3 -11 -11.3 -11 H-5 L-1.5 -8 H11.3 Q13.3 -8 13.3 -6 V9 Q13.3 11 11.3 11 H-11.3 Q-13.3 11 -13.3 9Z" fill="#ffdf80"/><path d="M-13.3 8 H13.3 V9 Q13.3 11 11.3 11 H-11.3 Q-13.3 11 -13.3 9Z" fill="#f5c95a"/></g>
<g transform="translate(122 338) scale(1.0)"><path d="M-13 -13 H13 V13 H-9 L-13 9Z" fill="#1e78d6"/><rect x="-8" y="-13" width="16" height="13" fill="#e6eaee"/><rect x="-5" y="5" width="13" height="8" fill="#e6eaee"/><rect x="-3" y="6.5" width="3" height="5" fill="#1e78d6"/></g>
<g transform="translate(168 338) scale(1.0)"><g fill="#f0f0f0"><rect x="-2.6" y="-13.3" width="5.2" height="6" transform="rotate(0)"/><rect x="-2.6" y="-13.3" width="5.2" height="6" transform="rotate(45)"/><rect x="-2.6" y="-13.3" width="5.2" height="6" transform="rotate(90)"/><rect x="-2.6" y="-13.3" width="5.2" height="6" transform="rotate(135)"/><rect x="-2.6" y="-13.3" width="5.2" height="6" transform="rotate(180)"/><rect x="-2.6" y="-13.3" width="5.2" height="6" transform="rotate(225)"/><rect x="-2.6" y="-13.3" width="5.2" height="6" transform="rotate(270)"/><rect x="-2.6" y="-13.3" width="5.2" height="6" transform="rotate(315)"/></g><circle r="8" fill="none" stroke="#f0f0f0" stroke-width="5"/></g>
<g transform="translate(214 338) scale(1.0)"><path d="M9.5 6.5 Q13.5 -5 3 -6.5 Q-3 -7 -9 1" fill="none" stroke="#ececec" stroke-width="2.6"/><path d="M-13.3 -1.5 L-13.3 7.5 L-4.5 7.5Z" fill="#ececec"/></g>
<g transform="translate(260 338) scale(1.0)"><path d="M-9.5 6.5 Q-13.5 -5 -3 -6.5 Q3 -7 9 1" fill="none" stroke="#8c8c8c" stroke-width="2.6"/><path d="M13.3 -1.5 L13.3 7.5 L4.5 7.5Z" fill="#8c8c8c"/></g>
<g transform="translate(30 378) scale(1.0)"><path d="M-6 -13 L3 7 M6 -13 L-3 7" stroke="#8e8e8e" stroke-width="3" fill="none"/><circle cx="-7" cy="9.5" r="3.3" fill="none" stroke="#8e8e8e" stroke-width="1.8"/><circle cx="7" cy="9.5" r="3.3" fill="none" stroke="#8e8e8e" stroke-width="1.8"/></g>
<g transform="translate(76 378) scale(1.0)"><path d="M-11 -12 H-2 L3 -7 V7 H-11Z" fill="#7e7e7e"/><path d="M-3 -7 H6 L11.3 -1.7 V12 H-3Z" fill="#949494"/><path d="M6 -7 L11.3 -1.7 H6Z" fill="#777"/></g>
<g transform="translate(122 378) scale(1.0)"><rect x="-13" y="-11" width="19" height="23.5" fill="#ffd978"/><rect x="-7" y="-13.3" width="8" height="3" rx="1" fill="#a1887f"/><path d="M-3 -7 H7 L13 -1 V12 H-3Z" fill="#e6eaee"/><path d="M7 -7 L13 -1 H7Z" fill="#b5c3cc"/></g>
<g transform="translate(30 451) scale(1.0)"><rect x="-5" y="-4" width="17" height="17" fill="#8d6e63"/><path d="M-4 -9 H11 M-4 -9 l3 -2.5 M-4 -9 l3 2.5 M11 -9 l-3 -2.5 M11 -9 l-3 2.5 M-10 -2.5 V12 M-10 -2.5 l-2.5 3 M-10 -2.5 l2.5 3 M-10 12 l-2.5 -3 M-10 12 l2.5 -3" stroke="#eee" stroke-width="1.5" fill="none"/></g>
<path d="M50.0 448 L55.0 451 L50.0 454Z" fill="#e8e8e8"/>
<g transform="translate(76 451) scale(1.0)"><rect x="-12.5" y="-9" width="7.5" height="8" fill="#5d4037"/><rect x="-3.5" y="-9" width="7.5" height="8" fill="#8d6e63"/><rect x="5.5" y="-9" width="7.5" height="8" fill="#d7ccc8"/><rect x="-12.5" y="1" width="7.5" height="8" fill="#616161"/><rect x="-3.5" y="1" width="7.5" height="8" fill="#bdbdbd"/><rect x="5.5" y="1" width="7.5" height="8" fill="#f5f5f5"/></g>
<g transform="translate(122 451) scale(1.0)"><path d="M-9 11.5 H2" stroke="#f44336" stroke-width="1.6"/><path d="M-4 11 L-3 1 Q-2 -4 2 -7" stroke="#f44336" stroke-width="3" fill="none"/><path d="M0.5 -12 L11 -10.5 L6 2 L-1 -5Z" fill="#f44336"/><circle cx="9.2" cy="-4.5" r="2.2" fill="#eee"/></g>
<g transform="translate(169 451) scale(1.0)"><path d="M-1 -9.5 H1" stroke="#f2f2f2" stroke-width="1.7"/><path d="M-2.5 -6.5 H2.5" stroke="#f2f2f2" stroke-width="1.7"/><path d="M-11 -3.5 H11" stroke="#f2f2f2" stroke-width="1.7"/><path d="M-7.5 -0.5 H7.5" stroke="#f2f2f2" stroke-width="1.7"/><path d="M-5.5 2.5 H5.5" stroke="#f2f2f2" stroke-width="1.7"/><path d="M-6.5 5.5 H6.5" stroke="#f2f2f2" stroke-width="1.7"/><path d="M-7.5 8.5 H7.5" stroke="#f2f2f2" stroke-width="1.7"/><rect x="-7" y="9.5" width="1.5" height="2" fill="#ddd"/><rect x="5.5" y="9.5" width="1.5" height="2" fill="#ddd"/><path d="M-12.5 -9 V-13 H-9 M9 -13 H12.5 V-9 M12.5 9 V13 H9 M-9 13 H-12.5 V9" stroke="#ff5722" stroke-width="1.5" fill="none"/></g>
<rect x="22" y="530.5" width="142" height="4.5" fill="#e8e8e8"/><rect x="13" y="524.5" width="10" height="17.5" rx="1" fill="#e4e4e4" stroke="#888" stroke-width="1"/><rect x="14" y="525.5" width="8" height="8" fill="#f6f6f6"/>
<rect x="59" y="547" width="85" height="38" fill="#434343"/><rect x="190" y="547" width="85" height="38" fill="#434343"/>
<g transform="translate(30 564) scale(1.0)"><g transform="rotate(40)"><rect x="-3.7" y="-15" width="7.4" height="22" fill="#e53935"/><path d="M-3.7 7 L0 15 L3.7 7Z" fill="#f3d9a4"/><path d="M-1.2 12.3 L0 15 L1.2 12.3Z" fill="#555"/></g></g>
<path d="M50.0 561 L55.0 564 L50.0 567Z" fill="#e8e8e8"/>
<g transform="translate(80 566) scale(1.0)"><path d="M0 -11 L10.5 1.5 Q11 2.5 10 3.5 L3.5 9.5 Q2 10.5 0.5 9.5 L-10 0Z" fill="#e9ecef"/><path d="M-12.5 -3 Q-17 -2 -13.5 8.5 Q-13 2 -9.5 -1Z" fill="#ff5a1f"/></g>
<g transform="translate(122 568.5) scale(1.0)"><path d="M0 -11 L10.5 1.5 Q11 2.5 10 3.5 L3.5 9.5 Q2 10.5 0.5 9.5 L-10 0Z" fill="#e9ecef"/><path d="M-12.5 -3 Q-17 -2 -13.5 8.5 Q-13 2 -9.5 -1Z" fill="#ff5a1f"/></g>
<rect x="106" y="553" width="6.3" height="6.3" fill="#ff9800"/><path d="M108.5 561 H114 V555.5" stroke="#ddd" stroke-width="1" fill="none"/>
<g transform="translate(139.7 556.5) scale(1.0)"><path d="M-1.8 -2.5 H1.8 V0 H2.6 V1 H-2.6 V0 H-1.8Z M-0.4 1 H0.4 V3 H-0.4Z" fill="#ddd"/></g>
<g transform="translate(271 556.5) scale(1.0)"><path d="M-1.8 -2.5 H1.8 V0 H2.6 V1 H-2.6 V0 H-1.8Z M-0.4 1 H0.4 V3 H-0.4Z" fill="#ddd"/></g>
<g transform="translate(162 564) scale(1.0)"><path d="M-12 11 L-10.5 7 L3 -6.5 L6.5 -3 L-7 10.2Z" fill="#dfe3e6"/><path d="M1.5 -7.5 L7.5 -1.5 L9 -3 L7.5 -4.5 Q13 -7 11 -11 Q8 -14.5 4.5 -9 L3 -10.5 Z" fill="#90a4ae"/></g>
<g transform="translate(196 554)"><rect x="0" y="0" width="8.2" height="8.2" fill="#ff5722"/><rect x="9.2" y="0" width="8.2" height="8.2" fill="#66bb6a"/><rect x="0" y="9.2" width="8.2" height="8.2" fill="#42a5f5"/><path d="M13 19 H24 M18.5 13.5 V24.5" stroke="#f2f2f2" stroke-width="1.5"/></g>
<g transform="translate(238 554)"><rect x="0" y="0" width="8.2" height="8.2" fill="#ff5722"/><rect x="9.2" y="0" width="8.2" height="8.2" fill="#66bb6a"/><rect x="0" y="9.2" width="8.2" height="8.2" fill="#42a5f5"/><path d="M18.5 13.5 V24 M14 20 L18.5 24.5 L23 20" stroke="#f2f2f2" stroke-width="1.4" fill="none"/></g>
<g transform="translate(293 564) scale(1.0)"><path d="M-15 0.5 L0 -7.5 L15 0.5 L0 8.5Z" fill="#43a047"/><path d="M-15 0.5 L0 8.5 V11 L-15 3Z" fill="#2e7d32"/><path d="M15 0.5 L0 8.5 V11 L15 3Z" fill="#1b6b22"/><ellipse cx="0" cy="0" rx="4.5" ry="3" fill="#f0f0f0"/><ellipse cx="0" cy="-9.5" rx="4.5" ry="2.8" fill="none" stroke="#eee" stroke-width="1.3"/></g>
<g transform="translate(30 606.5) scale(1.0)"><path d="M-11.5 11 L11.5 -11" stroke="#707070" stroke-width="3"/><path d="M-11.5 11 L-8.5 8.2 M8.5 -8.2 L11.5 -11" stroke="#f2f2f2" stroke-width="3"/></g>
<rect x="12" y="660" width="36" height="40" fill="#585858"/>
<g transform="translate(30 680) scale(1.0)"><path d="M-10 -10 L9 -2.5 L3 0.5 L11 8 L8 11 L0.5 3.5 L-2.5 9.5Z" fill="#f4f4f4"/></g>
<path d="M50.0 677 L55.0 680 L50.0 683Z" fill="#e8e8e8"/>
<g transform="translate(77 680) scale(1.0)"><path d="M-7 0 H7 M0 -7 V7 M-7 0 l2.5 -2.3 M-7 0 l2.5 2.3 M7 0 l-2.5 -2.3 M7 0 l-2.5 2.3 M0 -7 l-2.3 2.5 M0 -7 l2.3 2.5 M0 7 l-2.3 -2.5 M0 7 l2.3 -2.5" stroke="#757575" stroke-width="1.6" fill="none"/><path d="M0.5 -11.5 A11.5 11.5 0 0 1 11 -1 M-0.5 11.5 A11.5 11.5 0 0 1 -11 1" stroke="#757575" stroke-width="1.2" fill="none"/><path d="M3.5 -13.5 L0 -11.5 L3 -9 M-3.5 13.5 L0 11.5 L-3 9" stroke="#757575" stroke-width="1.2" fill="none"/></g>
<g transform="translate(123 680) scale(1.0)"><path d="M-12 -12 H12 Q7 0 12 12 H-12 Q-7 0 -12 -12Z M-4 -12 Q-2.5 0 -4 12 M4 -12 Q2.5 0 4 12 M-10 -4.5 H10 M-10 4.5 H10" stroke="#f0f0f0" stroke-width="1.5" fill="none"/></g>
<rect x="157.8" y="668.8" width="22.8" height="22.8" fill="none" stroke="#f0f0f0" stroke-width="1.6"/>
<path d="M189.5 677 L194.5 680 L189.5 683Z" fill="#e8e8e8"/>
<g transform="translate(216 680) scale(1.0)"><path d="M-11 -12.5 H11 L11.5 -7 H10.3 Q9.5 -10.5 6 -10.8 H2.3 V9 Q2.3 11 5.5 11.3 V12.5 H-5.5 V11.3 Q-2.3 11 -2.3 9 V-10.8 H-6 Q-9.5 -10.5 -10.3 -7 H-11.5Z" fill="#f0f0f0"/></g>
<g transform="translate(261 680) scale(1.0)"><path d="M6 -14 L16.5 -3.5 L7 6 L-3.5 -4.5Z" fill="#8e8e8e"/><path d="M-3 -6 Q-9 -4 -7 4 L-5 4 Q-6.5 -2 -1 -3Z" fill="#666"/><circle cx="-7.3" cy="8" r="5.8" fill="none" stroke="#777" stroke-width="1.3"/><path d="M-11.5 9 H-3 A4.3 4.3 0 0 1 -11.5 9Z" fill="#777"/></g>
<path d="M282.5 677 L287.5 680 L282.5 683Z" fill="#e8e8e8"/>
<g transform="translate(306 680) scale(1.0)"><path d="M-12.5 -5 Q-12.5 -9.5 -8 -9.5 H1 Q5.5 -9.5 5.5 -5 V8 H-12.5Z" fill="#e8ecef"/><circle cx="-3.5" cy="-1.5" r="5" fill="#37474f"/><path d="M5.5 6.5 H16 V10.5" stroke="#b0bec5" stroke-width="1.2" fill="none"/></g>
<g transform="translate(30 720) scale(1.0)"><rect x="-13" y="-13" width="26" height="26" rx="2.5" fill="#9ccc65"/><path d="M-9 0 H9 M0 -9 V9" stroke="#1b5e20" stroke-width="5.5"/></g>
<g transform="translate(76 720) scale(1.0)"><rect x="-11.3" y="-12" width="14" height="19" fill="#43a047"/><rect x="-3" y="-7.5" width="14.3" height="19.5" fill="#4caf50"/><circle cx="-7.5" cy="-8" r="2.3" fill="#2e7d32"/><path d="M-9.5 -1 L-7.5 -4.5 L-5.5 -1Z M-0.5 7.5 L1.5 3.5 L3.5 7.5Z M5.5 7.5 L7.5 3.5 L9.5 7.5Z" fill="#2e7d32"/><circle cx="1.5" cy="-2" r="2.3" fill="#2e7d32"/><rect x="5.3" y="-4.3" width="4.3" height="4.3" fill="#2e7d32"/><rect x="-1" y="9" width="11" height="1.3" fill="#2e7d32"/><rect x="-9.8" y="1.5" width="5.5" height="1.2" fill="#2e7d32"/></g>
<g transform="translate(122 720) scale(1.0)"><path d="M-12.5 -5.5 L-8 -12 H3 L7.5 -6 L12.5 -12" stroke="#eee" stroke-width="1.3" fill="none"/><path d="M0 -6.5 V2 M-3.5 -1.5 L0 2.5 L3.5 -1.5" stroke="#ff5722" stroke-width="1.6" fill="none"/><path d="M-12.5 13 Q-9 4.5 -2 8.5 Q6 15.5 12.5 7" stroke="#ffdf20" stroke-width="1.5" fill="none"/></g>
<g transform="translate(168 720) scale(1.0)"><path d="M-14.5 -10 Q-6 0 -14.5 10 L-4.5 6.5 M-14.5 -10 L-4.5 -7" stroke="#eee" stroke-width="1.3" fill="none"/><circle cx="-3.3" cy="-7" r="1.6" fill="none" stroke="#ccc" stroke-width="1"/><circle cx="-3.3" cy="6.8" r="1.6" fill="none" stroke="#ccc" stroke-width="1"/><path d="M-1.5 0 H7 M3.5 -3.5 L7 0 L3.5 3.5" stroke="#ff5722" stroke-width="1.7" fill="none"/><path d="M7 -10.5 Q21 0 7 10.5" stroke="#ffdf20" stroke-width="1.5" fill="none"/></g>
<g transform="translate(214 720) scale(1.0)"><path d="M-12 -11 L12.5 0 L-12 11.5" stroke="#eee" stroke-width="1.3" fill="none"/><path d="M-12.5 -12 Q9 0 -12.5 12.5" stroke="#ffdf20" stroke-width="1.6" fill="none"/></g>
<g transform="translate(260 720) scale(1.0)"><path d="M-8.5 9 L8 -8.5" stroke="#ffdf20" stroke-width="1.6"/><path d="M-11 6.5 L-5.5 11.5 M-11 11.5 L-5.5 6.5 M5 -10.5 L10.5 -5.5 M5 -5.5 L10.5 -10.5" stroke="#eee" stroke-width="1.3"/><path d="M-7.5 -3 L-4 -0.5 M-3.5 -6.5 L-0.5 -3" stroke="#eee" stroke-width="1.8"/><circle cx="3" cy="6.5" r="1.9" fill="none" stroke="#eee" stroke-width="1.2"/><circle cx="7" cy="3" r="1.9" fill="none" stroke="#eee" stroke-width="1.2"/><path d="M1.5 1.5 L5 5" stroke="#eee" stroke-width="1.2"/></g>
<g transform="translate(306 720) scale(1.0)"><ellipse cx="0" cy="5.5" rx="13" ry="7.5" fill="#1e78d6"/><path d="M-4 -5 H4 L9 2 H-9Z" fill="#2a8be8"/><ellipse cx="0" cy="7.5" rx="12" ry="5" fill="#1a6ac4"/><ellipse cx="0" cy="-9.5" rx="4.6" ry="2.8" fill="none" stroke="#eee" stroke-width="1.4"/><path d="M-6 1.5 Q0 4.5 6 1.5" stroke="#e8f2ff" stroke-width="1.3" fill="none"/></g>
<g transform="translate(30 760) scale(1.0)"><path d="M-11 -2 Q-3.5 -3.5 -2.5 -10.5" stroke="#eee" stroke-width="1.3" fill="none"/><path d="M-3 -2.5 L3 3.5 M3.5 -1.5 L3.3 3.8 L-2 4" stroke="#ff5722" stroke-width="1.6" fill="none"/><path d="M-11 11 Q10 10 11 -11" stroke="#ffdf20" stroke-width="1.5" fill="none"/></g>
<g transform="translate(76 760) scale(1.0)"><path d="M-2.5 -9 Q-10.5 -8 -10.5 1 V10 H-2.5" stroke="#e0e0e0" stroke-width="1.7" fill="none"/><path d="M2.5 -9 Q10.5 -8 10.5 1 V10 H2.5" stroke="#ffdf20" stroke-width="1.7" fill="none"/><path d="M0 -15 V15" stroke="#ff5722" stroke-width="1.8" stroke-dasharray="4 1.6"/></g>
<g transform="translate(122 760) scale(1.0)"><path d="M-13 -9 Q-13 -11 -11 -11 H-5.5 L-1.5 -7.5 H11 Q13 -7.5 13 -5.5 V9.5 Q13 11.5 11 11.5 H-11 Q-13 11.5 -13 9.5Z" fill="#ffdf80"/><polygon points="6.50,-1.00 8.62,3.59 13.63,4.18 9.92,7.61 10.91,12.57 6.50,10.10 2.09,12.57 3.08,7.61 -0.63,4.18 4.38,3.59" fill="#333" stroke="#eee" stroke-width="1.3"/></g>
<circle cx="30" cy="824.5" r="3.3" fill="none" stroke="#ffe21f" stroke-width="1.4"/><circle cx="38.8" cy="833" r="3.3" fill="none" stroke="#ffe21f" stroke-width="1.4"/><circle cx="30" cy="841.7" r="3.3" fill="none" stroke="#ffe21f" stroke-width="1.4"/><circle cx="21.2" cy="833" r="3.3" fill="none" stroke="#e4e4e4" stroke-width="1.4"/>
<g transform="translate(76 833) scale(1.0)"><path d="M-13 1 Q-6 -4 0 -0.5 Q6 3 13 0" stroke="#eee" stroke-width="1.2" fill="none"/><path d="M-13 -1.5 Q-6 -6.5 0 -3 Q6 0.5 13 -2.5" stroke="#eee" stroke-width="1" fill="none"/><circle cx="-10.5" cy="-6.5" r="1.8" fill="#ffe21f"/><circle cx="-5" cy="-8.5" r="1.8" fill="#ffe21f"/><circle cx="0.5" cy="-7" r="1.8" fill="#ffe21f"/><circle cx="6" cy="-5.5" r="1.8" fill="#ffe21f"/><circle cx="11" cy="-5.5" r="1.8" fill="#ffe21f"/><circle cx="-10.5" cy="4.5" r="1.8" fill="#ffe21f"/><circle cx="-5" cy="2.8" r="1.8" fill="#ffe21f"/><circle cx="0.5" cy="4.5" r="1.8" fill="#ffe21f"/><circle cx="6" cy="6.5" r="1.8" fill="#ffe21f"/><circle cx="11" cy="6" r="1.8" fill="#ffe21f"/></g>
<path d="M110.5 833.5 L119.4 825.5 L127.2 840.3 L133.4 826.8" stroke="#e8e8e8" stroke-width="1.2" fill="none"/>
<circle cx="110.5" cy="833.5" r="2.9" fill="#333" stroke="#ffe21f" stroke-width="1.4"/>
<circle cx="119.4" cy="825.5" r="2.9" fill="#333" stroke="#ffe21f" stroke-width="1.4"/>
<circle cx="127.2" cy="840.3" r="2.9" fill="#333" stroke="#ffe21f" stroke-width="1.4"/>
<circle cx="133.4" cy="826.8" r="2.9" fill="#333" stroke="#ffe21f" stroke-width="1.4"/>
<g transform="translate(30 931) scale(1.0)"><path d="M-11 -11 V11" stroke="#707070" stroke-width="1.4"/><path d="M-6 0 H2 M-2.5 -3.3 L-6 0 L-2.5 3.3" stroke="#606060" stroke-width="1.5" fill="none"/><rect x="6.5" y="-2.3" width="4.6" height="4.6" fill="#707070"/></g>
<path d="M50.0 928 L55.0 931 L50.0 934Z" fill="#e8e8e8"/>
<g transform="translate(77 931) scale(1.0)"><rect x="-13" y="-13" width="26" height="26" rx="2" fill="#a1887f"/><path d="M-9.5 2 V-9.5 H10 V9.5 M-9.5 9.5 H2 V-2.5 H-4.5 V4 M6 -4 V9.5" stroke="#f8f4f2" stroke-width="2.6" fill="none"/></g>
<g transform="translate(123 931) scale(1.0)"><rect x="-12.3" y="-12.3" width="24.6" height="24.6" fill="none" stroke="#707070" stroke-width="1.6" stroke-dasharray="4 3.4"/><rect x="-8" y="-8" width="12" height="12" fill="#3d3d3d"/><rect x="-3" y="-3" width="11" height="11" fill="#6a6a6a"/></g>
<path d="M143.3 928 L148.3 931 L143.3 934Z" fill="#e8e8e8"/>
<g transform="translate(168 931) scale(1.0)"><rect x="-12.5" y="-10" width="21" height="16.5" fill="none" stroke="#707070" stroke-width="1.5"/><circle cx="7.5" cy="3" r="8.6" fill="none" stroke="#707070" stroke-width="1.3"/></g>
<path d="M190.5 928 L195.5 931 L190.5 934Z" fill="#e8e8e8"/>
<g transform="translate(217 931) scale(1.0)"><path d="M-12.5 -10.3 H2 Q10 -9 12.5 -6 V6 Q10 9.5 2 10.5 H-12.5" fill="none" stroke="#707070" stroke-width="1.5"/></g>
<path d="M237.2 928 L242.2 931 L237.2 934Z" fill="#e8e8e8"/>
<g transform="translate(264 931) scale(1.0)"><clipPath id="cphs"><circle r="13"/></clipPath><g clip-path="url(#cphs)"><path d="M-37 13 L-11 -13" stroke="#e0e0e0" stroke-width="1.5"/><path d="M-32 13 L-6 -13" stroke="#e0e0e0" stroke-width="1.5"/><path d="M-27 13 L-1 -13" stroke="#e0e0e0" stroke-width="1.5"/><path d="M-22 13 L4 -13" stroke="#e0e0e0" stroke-width="1.5"/><path d="M-17 13 L9 -13" stroke="#e0e0e0" stroke-width="1.5"/><path d="M-12 13 L14 -13" stroke="#e0e0e0" stroke-width="1.5"/><path d="M-7 13 L19 -13" stroke="#e0e0e0" stroke-width="1.5"/><path d="M-2 13 L24 -13" stroke="#e0e0e0" stroke-width="1.5"/><path d="M3 13 L29 -13" stroke="#e0e0e0" stroke-width="1.5"/><path d="M8 13 L34 -13" stroke="#e0e0e0" stroke-width="1.5"/></g><polygon points="0.00,-7.80 2.47,-2.90 7.89,-2.06 3.99,1.80 4.88,7.21 0.00,4.70 -4.88,7.21 -3.99,1.80 -7.89,-2.06 -2.47,-2.90" fill="#333" stroke="#f44336" stroke-width="1.6"/></g>
<g transform="translate(310 931) scale(1.0)"><circle r="12" fill="none" stroke="#eee" stroke-width="1.5"/><circle r="8" fill="none" stroke="#eee" stroke-width="1.5"/><path d="M-8 -12 L2 -0.5 L-1.5 0.5 L8.5 12" stroke="#f44336" stroke-width="1.7" fill="none"/></g>
<g transform="translate(30 1003) scale(1.0)"><path d="M-14.7 0 L0 -10 L14.7 0 L0 9.7Z" fill="#1976d2"/><path d="M-14.7 0 L0 -10 L0 9.7Z" fill="#2196f3"/></g>
<g transform="translate(76.4 1003.6) scale(1.0)"><path d="M-12.5 1 C-12.5 -3 -8 -5 -4 -7 L0.3 -9.2 L1.5 -12.3 C6 -11 12.5 -8 12.3 -3.5 C12 0 7 2 3 4 L-1 6.5 L-2 9.5 C-6 8.5 -12.5 5.5 -12.5 1Z" fill="#c62828" transform="translate(0 2.3)"/><path d="M-12.5 1 C-12.5 -3 -8 -5 -4 -7 L0.3 -9.2 L1.5 -12.3 C6 -11 12.5 -8 12.3 -3.5 C12 0 7 2 3 4 L-1 6.5 L-2 9.5 C-6 8.5 -12.5 5.5 -12.5 1Z" fill="#ffcdd2"/><path d="M1.5 -12.3 C6 -11 12.5 -8 12.3 -3.5 C12 0 7 2 3 4 L-1 6.5 L-2 9.5 L-3.3 6.3 L-8 3.6 L7.3 -5.3 C9 -7 7 -9 2.5 -9.8Z" fill="#e57373"/><path d="M-8 3.6 L7.3 -5.3" stroke="#d32f2f" stroke-width="1.1"/></g>
<path d="M96.5 1001 L101.5 1004 L96.5 1007Z" fill="#e8e8e8"/>
<g transform="translate(123.9 1004.6) scale(1.0)"><path d="M-4.5 -8.7 L-13 -3.3 L-14 1 V4.4 L-6 5 L2 11.5 L4 3 L14 5 V2.5 L4.5 -8.7Z" fill="#1976d2"/><path d="M-4.5 -8.7 L-13 -3.3 L-14 1 L-5.5 2.5 L-1.5 -6.5Z" fill="#1e88e5"/><path d="M-4.5 -8.7 L-5.5 2.5 L2 8 L4 0.5 L4.5 -8.7Z" fill="#2196f3"/><path d="M-1 -6.5 L0 7 L2 8 L4 0.5 L3 -6.5Z" fill="#42a5f5" opacity="0.6"/><path d="M4.5 -8.7 L14 2.5 L4 0.5Z" fill="#1565c0"/><path d="M14 2.5 V5 L4 3 L4 0.5Z" fill="#0d47a1"/><path d="M-14 1 V4.4 L-6 5 L2 11.5 V8 L-5.5 2.5Z" fill="#1565c0"/><path d="M2 8 V11.5 L4 3 V0.5Z" fill="#0d47a1"/><ellipse cx="0" cy="-8.7" rx="4.5" ry="2.3" fill="#2a9df4"/></g>
<g transform="translate(168.9 1003.8) scale(1.0)"><path d="M-12.6 -4.1 L-2.9 -12.6 L4 -6.5 L-3.5 -1.3Z" fill="#1976d2"/><path d="M-12.6 -4.1 L-2.9 -12.6 L-3.5 -1.3Z" fill="#64b5f6"/><path d="M-12.6 -4.1 L-3.5 -1.3 V0.8 L-12.6 -2Z" fill="#1e88e5"/><path d="M-4 -1 L4 -6.5 L13 -0.5 L13 2 L5 6 L-4 1.5Z" fill="#1976d2"/><path d="M4 -6.5 L13 -0.5 L5 4Z" fill="#1565c0"/><path d="M-12.6 7 L-4.5 0 L1 5 L-5 10.5Z" fill="#42a5f5"/><path d="M-4.5 0 L1 5 L-5 10.5Z" fill="#1976d2"/><path d="M-12.6 7 L-5 10.5 V12.7 L-12.6 9.2Z" fill="#1e88e5"/><path d="M-5 10.5 L1 5 V7.2 L-5 12.7Z" fill="#1565c0"/><path d="M1 7.5 L3.7 -0.3 L12.7 7.5 L6 11Z" fill="#42a5f5"/><path d="M1 7.5 L3.7 -0.3 L6.5 8.5Z" fill="#90caf9"/><path d="M1 7.5 L6 11 V13 L1 9.5Z" fill="#1e88e5"/><path d="M12.7 7.5 L6 11 V13 L12.7 9.5Z" fill="#1565c0"/></g>
<g transform="translate(215 1003.2) scale(1.0)"><ellipse cx="0" cy="-3.0" rx="7.3" ry="4.9" fill="#fb8c00"/><ellipse cx="-8" cy="2.4000000000000004" rx="7.3" ry="4.9" fill="#fb8c00"/><ellipse cx="8" cy="2.4000000000000004" rx="7.3" ry="4.9" fill="#fb8c00"/><ellipse cx="0" cy="7.8" rx="7.3" ry="4.9" fill="#fb8c00"/><ellipse cx="0" cy="-5.2" rx="7.3" ry="4.9" fill="#ffeb3b"/><ellipse cx="-8" cy="0.2" rx="7.3" ry="4.9" fill="#ffeb3b"/><ellipse cx="8" cy="0.2" rx="7.3" ry="4.9" fill="#ffeb3b"/><ellipse cx="0" cy="5.6" rx="7.3" ry="4.9" fill="#ffeb3b"/><ellipse cx="0" cy="-5.2" rx="4.6" ry="2.9" fill="none" stroke="#f57c00" stroke-width="1"/><ellipse cx="0" cy="-5.2" rx="1.6" ry="1" fill="#e65100"/><ellipse cx="-8" cy="0.2" rx="4.6" ry="2.9" fill="none" stroke="#f57c00" stroke-width="1"/><ellipse cx="-8" cy="0.2" rx="1.6" ry="1" fill="#e65100"/><ellipse cx="8" cy="0.2" rx="4.6" ry="2.9" fill="none" stroke="#f57c00" stroke-width="1"/><ellipse cx="8" cy="0.2" rx="1.6" ry="1" fill="#e65100"/><ellipse cx="0" cy="5.6" rx="4.6" ry="2.9" fill="none" stroke="#f57c00" stroke-width="1"/><ellipse cx="0" cy="5.6" rx="1.6" ry="1" fill="#e65100"/><path d="M-9.5 -6.2 L9.5 6.6 M9.5 -6.2 L-9.5 6.6" stroke="#e65100" stroke-width="1.2"/></g>
<path d="M246.1 1004.9 L260.6 997.5 L275.5 1004.4 L260.6 1012.4Z" fill="#e8e8e8" /><path d="M246.1 1004.9 L260.6 1012.4 L260.6 1014.8 L246.1 1007.3Z" fill="#bdbdbd" /><path d="M275.5 1004.4 L260.6 1012.4 L260.6 1014.8 L275.5 1006.8Z" fill="#9a9a9a" />
<path d="M252.8 1002.7 L261 1006.4 L268 1002 L268 1004.3 L261 1009 L252.8 1004.8Z" fill="#f9a825" /><path d="M261 1006.4 L268 1002 L268 1004.3 L261 1009Z" fill="#f57f17" />
<path d="M253.9 994.2 L264.7 991.2 L268 1002 L261 1006.4 L252.8 1002.7Z" fill="#ffeb3b" />
<g transform="translate(307 1003.8) scale(1.0)"><path d="M-14.8 0.8 L-3 -9.5 L15.2 1.1 L0 10.8Z" fill="#f57c00"/><path d="M-14.8 0.8 L0 10.8 V8.5 L-13 -0.5Z" fill="#fbc02d"/><path d="M-14.8 0.8 L-3 -9.5 L2 -7 L-7 5.8Z" fill="#ffa726"/><path d="M-3 -9.5 L2 -7 L-7 5.8 L-5 -1Z" fill="#fb8c00"/><path d="M-7 5.8 L2.5 -5 L7 -6.5 L9 -3.5 L0 10.8Z" fill="#ffa726"/><path d="M7 -6.5 L9 -3.5 L0 10.8 L2 2Z" fill="#ef6c00"/><path d="M0 10.8 L9.5 -2 L13 -3.5 L15.2 1.1Z" fill="#fb8c00"/><path d="M-4.5 -3.5 L-2.5 -7 L-1 -3.5Z M-0.5 0 L2.5 -3.5 L3.5 0.5 L1.5 2Z M3.5 2 L6.5 0.5 L6 4Z" fill="#fff3e0"/></g>
<g transform="translate(30 1044) scale(1.0)"><path d="M-13 -9.5 Q-13 -11.5 -11 -11.5 H-6 L-2.5 -8.3 H11.2 Q13.2 -8.3 13.2 -6.3 V9 Q13.2 11 11.2 11 H-11 Q-13 11 -13 9Z" fill="#ffe08a"/><polygon points="6.90,-4.70 9.49,1.04 15.74,1.73 11.08,5.96 12.37,12.12 6.90,9.00 1.43,12.12 2.72,5.96 -1.94,1.73 4.31,1.04" fill="#ffeb3b" stroke="#3a3a2a" stroke-width="1"/></g>
<path d="M50.3 1041 L55.3 1044 L50.3 1047Z" fill="#e8e8e8"/>
<defs><linearGradient id="gbf" x1="0" y1="0" x2="1" y2="0"><stop offset="0" stop-color="#42a5f5"/><stop offset="0.4" stop-color="#7ec3fa"/><stop offset="0.6" stop-color="#2196f3"/><stop offset="1" stop-color="#2196f3"/></linearGradient></defs>
<path d="M62.1 1044.1 L77 1034.8 L92 1044.4 L77 1052.4Z" fill="url(#gbf)" /><path d="M62.1 1044.1 L77 1052.4 L77 1054.4 L62.1 1046.1Z" fill="#1976d2" /><path d="M92 1044.4 L77 1052.4 L77 1054.4 L92 1046.4Z" fill="#1565c0" />
<path d="M97.5 1041 L102.5 1044 L97.5 1047Z" fill="#e8e8e8"/>
<path d="M108.9 1041.8 L118.6 1036.1 L118.6 1048.2 L108.9 1042.6Z" fill="#e2e2e2" /><path d="M108.9 1042.6 L118.6 1048.2 L118.6 1051.7 L108.9 1045.2Z" fill="#b0b0b0" />
<path d="M119.9 1036.5 L122.7 1037.6 L128.2 1033.5 L131.5 1035.5 L138.8 1044.1 V1046 Q128 1047 123.9 1054.7 L119.9 1052Z" fill="#2196f3"/><path d="M138.8 1044.1 V1046 Q128 1047 123.9 1054.7 L123.5 1052 Q128 1045.5 138.8 1044.1Z" fill="#1565c0"/><path d="M128.2 1033.5 L131.5 1035.5 L138.8 1044.1 Q132 1044.5 128 1047.5Z" fill="#1e88e5"/><path d="M119.9 1049.8 L123.5 1052 L123.9 1054.7 L119.9 1052Z" fill="#1565c0"/>
<path d="M155.2 1043.5 L170 1033.9 L184.9 1042.4 L170 1052.8Z" fill="#ffeb3b" /><path d="M155.2 1043.5 L170 1052.8 L170 1054.8 L155.2 1045.5Z" fill="#fbc02d" /><path d="M184.9 1042.4 L170 1052.8 L170 1054.8 L184.9 1044.4Z" fill="#fb8c00" />
<path d="M156.7 1044.4 L171.5 1034.7 M158.9 1045.8 L173.7 1036.0 M161.1 1047.2 L176.0 1037.3 M163.4 1048.6 L178.2 1038.6 M165.6 1050.1 L180.5 1039.9 M167.9 1051.5 L182.8 1041.2 " stroke="#e65100" stroke-width="1.05" fill="none"/>
<path d="M201.2 1044.6 L215.7 1038 L230.5 1044.6 L215.7 1052Z" fill="#e6e6e6" /><path d="M201.2 1044.6 L215.7 1052 L215.7 1054.7 L201.2 1047.3Z" fill="#cfcfcf" /><path d="M230.5 1044.6 L215.7 1052 L215.7 1054.7 L230.5 1047.3Z" fill="#9a9a9a" />
<path d="M201.2 1038.3 L215.7 1031.3 L230.5 1038 L215.7 1044.6Z" fill="#2196f3" /><path d="M201.2 1038.3 L215.7 1044.6 L215.7 1050.0 L201.2 1043.7Z" fill="#1976d2" /><path d="M230.5 1038 L215.7 1044.6 L215.7 1050.0 L230.5 1043.4Z" fill="#0d47a1" />
<path d="M215.7 1039.3 V1031 M212 1034.3 L215.7 1030.3 L219.5 1034.3" stroke="#8a8f94" stroke-width="3.4" fill="none" opacity="0.55"/><path d="M215.7 1039.3 V1031 M212.2 1034.2 L215.7 1030.5 L219.3 1034.2" stroke="#f4f4f4" stroke-width="2" fill="none"/>
<path d="M247.3 1045 L261.7 1038 L276.6 1045 L261.7 1052.8Z" fill="#c5cae9" /><path d="M247.3 1045 L261.7 1052.8 L261.7 1054.8 L247.3 1047Z" fill="#7986cb" /><path d="M276.6 1045 L261.7 1052.8 L261.7 1054.8 L276.6 1047Z" fill="#3949ab" />
<ellipse cx="263" cy="1044.8" rx="6.3" ry="4" fill="#9fa8da"/><ellipse cx="263" cy="1045.3" rx="4.4" ry="2.8" fill="#c5cae9"/><path d="M253 1043 L257.5 1041 L257.5 1044 Q257.5 1046.5 260 1047.5" stroke="#7986cb" stroke-width="1.5" fill="none"/>
<ellipse cx="264" cy="1036.6" rx="5.6" ry="4.3" fill="none" stroke="#f9a825" stroke-width="1.7"/><path d="M251 1034.3 L258.7 1037.3" stroke="#f9a825" stroke-width="1.8"/><ellipse cx="263" cy="1039" rx="2.5" ry="1.3" fill="#c5cae9"/>
<path d="M282.5 1041 L287.5 1044 L282.5 1047Z" fill="#e8e8e8"/>
<path d="M294 1044.6 L308.9 1037.2 L323.7 1044.6 L308.9 1052.8Z" fill="#ffeb3b" /><path d="M294 1044.6 L308.9 1052.8 L308.9 1054.8 L294 1046.6Z" fill="#fbc02d" /><path d="M323.7 1044.6 L308.9 1052.8 L308.9 1054.8 L323.7 1046.6Z" fill="#f57f17" />
<ellipse cx="308.9" cy="1044.6" rx="4.3" ry="2.8" fill="#f57c00"/><ellipse cx="308.9" cy="1045.3" rx="3.5" ry="2" fill="#333"/><ellipse cx="308.9" cy="1034.6" rx="5" ry="3.7" fill="#f4511e"/>
<path d="M329.5 1041 L334.5 1044 L329.5 1047Z" fill="#e8e8e8"/>
<path d="M15 1085.2 L30.3 1075.9 L44.7 1084.8 L29.9 1093.3Z" fill="#d4d4d4" /><path d="M15 1085.2 L29.9 1093.3 L29.9 1094.8999999999999 L15 1086.8Z" fill="#a8a8a8" /><path d="M44.7 1084.8 L29.9 1093.3 L29.9 1094.8999999999999 L44.7 1086.3999999999999Z" fill="#8a8a8a" />
<path d="M22.8 1089.4 L37.7 1080.3 L44.7 1084.8 L29.9 1093.3Z" fill="#2196f3" /><path d="M22.8 1089.4 L29.9 1093.3 L29.9 1094.9 L22.8 1091Z" fill="#1976d2" /><path d="M44.7 1084.8 L29.9 1093.3 L29.9 1094.9 L44.7 1086.4Z" fill="#1565c0" />
<path d="M25.5 1080.2 Q28.5 1074.5 32.5 1078.5 L34.3 1082.5 M30.5 1082.7 L34.6 1084.3 L36.3 1080" stroke="#777" stroke-width="3.2" fill="none" opacity="0.5"/><path d="M25.5 1080.2 Q28.5 1074.5 32.5 1078.5 L34.3 1082.5 M30.8 1082.5 L34.5 1084 L36 1080.2" stroke="#f4f4f4" stroke-width="1.9" fill="none"/>
<path d="M61.1 1088.9 L75.8 1080.5 L90.4 1087.8 L75.6 1096.4Z" fill="#cfcfcf" /><path d="M61.1 1088.9 L75.6 1096.4 L75.6 1098.5 L61.1 1091.0Z" fill="#a8a8a8" /><path d="M90.4 1087.8 L75.6 1096.4 L75.6 1098.5 L90.4 1089.8999999999999Z" fill="#808080" />
<path d="M66 1088.5 Q69 1083.5 72.5 1087.5 L84 1082 L86.5 1084.5 L75 1092.5Z" fill="#f2f2f2"/>
<path d="M62.2 1078.8 L81.1 1069.2 Q87 1070.5 87.5 1076.5 L90 1078.8 L75.6 1087 L72.5 1083.5 Q71.5 1077.5 66 1079.5 L64 1081Z" fill="#2196f3"/><path d="M75 1072.3 L81.1 1069.2 Q87 1070.5 87.5 1076.5 L74.5 1084 Q74.5 1077.5 68.5 1076Z" fill="#64b5f6"/><path d="M62.2 1078.8 L64 1081 L66 1079.5 Q71.5 1077.5 72.5 1083.5 L75.6 1087 L75.6 1084.8 L73.3 1082.2 Q72 1075.5 65.5 1077Z" fill="#1565c0"/><path d="M75.6 1084.8 V1087 L90 1078.8 L88.8 1077.3Z" fill="#1976d2"/>
<defs><linearGradient id="gbw" x1="0" y1="1" x2="1" y2="0"><stop offset="0" stop-color="#42a5f5"/><stop offset="0.35" stop-color="#64b5f6"/><stop offset="0.7" stop-color="#2196f3"/><stop offset="1" stop-color="#2196f3"/></linearGradient></defs>
<path d="M107.1 1084 Q115 1080.5 118 1072.5 Q119.5 1069.8 122 1069.2 L136.8 1077.7 V1085.5 L122 1094 L107.1 1085.6Z" fill="url(#gbw)"/><path d="M136.8 1077.7 V1085.5 L122 1094 V1092 Q130 1088.5 132.5 1081 Q133.5 1078 136.8 1077.7Z" fill="#1565c0"/><path d="M107.1 1084 L122 1092 V1094 L107.1 1085.6Z" fill="#1976d2"/>
<g transform="translate(168.4 1077) scale(1 0.62)"><polygon points="1.13,-6.73 2.93,-0.64 9.13,0.73 3.90,4.32 4.51,10.63 -0.52,6.77 -6.34,9.30 -4.22,3.32 -8.43,-1.43 -2.08,-1.26" fill="#1565c0"/><polygon points="1.13,-9.23 2.93,-3.14 9.13,-1.77 3.90,1.82 4.51,8.13 -0.52,4.27 -6.34,6.80 -4.22,0.82 -8.43,-3.93 -2.08,-3.76" fill="#2196f3"/></g>
<ellipse cx="168" cy="1091.5" rx="10" ry="6" fill="#9a9a9a"/><ellipse cx="168" cy="1090" rx="10" ry="6" fill="#e2e2e2"/><g transform="translate(168 1090.3) scale(1 0.6)"><polygon points="0.93,-7.54 2.25,-2.41 7.46,-1.45 2.99,1.39 3.68,6.65 -0.40,3.28 -5.18,5.56 -3.24,0.63 -6.89,-3.21 -1.60,-2.89" fill="#4a4a4a"/></g>
<path d="M204.6 1080.4 L214 1086 L214 1092.8 L199.4 1083.9Z" fill="#1976d2" /><path d="M223.4 1080.4 L214 1086 L214 1092.8 L228.7 1083.9Z" fill="#0d47a1" /><path d="M214 1074.8 L223.4 1080.4 L214 1086 L204.6 1080.4Z" fill="#e8e8e8" />
<path d="M245 1088.3 L260 1080 L274.9 1088.3 L260 1096.8Z" fill="#fdd835" /><path d="M245 1088.3 L260 1096.8 L260 1098.7 L245 1090.2Z" fill="#fbc02d" /><path d="M274.9 1088.3 L260 1096.8 L260 1098.7 L274.9 1090.2Z" fill="#fb8c00" />
<path d="M245 1083.3 L260 1075 L274.9 1083.3 L260 1091.5Z" fill="#d6d6ce" /><path d="M245 1083.3 L260 1091.5 L260 1093.5 L245 1085.3Z" fill="#b4b4ac" /><path d="M274.9 1083.3 L260 1091.5 L260 1093.5 L274.9 1085.3Z" fill="#8c8c84" />
<path d="M245 1078.4 L260 1070.2 L274.9 1078.4 L260 1086.6Z" fill="#e8e8e8" /><path d="M245 1078.4 L260 1086.6 L260 1088.5 L245 1080.3000000000002Z" fill="#a8a8a8" /><path d="M274.9 1078.4 L260 1086.6 L260 1088.5 L274.9 1080.3000000000002Z" fill="#7a7a7a" />
<path d="M259.8 1079.3 V1072 M256.5 1074.4 L259.9 1070.8 L263.4 1074.4" stroke="#9a9a9a" stroke-width="3" fill="none" opacity="0.6"/><path d="M259.8 1079 V1072 M256.8 1074.2 L259.9 1071 L263 1074.2" stroke="#f2f2f2" stroke-width="1.7" fill="none"/>
<circle cx="306" cy="1083.9" r="14.4" fill="none" stroke="#b7bce0" stroke-width="1.4"/><rect x="296" y="1081" width="5.5" height="5.6" fill="#c5cae9"/><path d="M296.3 1086.3 L301.2 1081.3" stroke="#333" stroke-width="0.9"/><rect x="303.1" y="1081" width="5.5" height="5.6" fill="#c5cae9"/><path d="M303.40000000000003 1086.3 L308.3 1081.3" stroke="#333" stroke-width="0.9"/><rect x="310.6" y="1081" width="5.5" height="5.6" fill="#c5cae9"/><path d="M310.90000000000003 1086.3 L315.8 1081.3" stroke="#333" stroke-width="0.9"/><path d="M310.7 1074.5 L315 1078.6 H310.7Z M296.3 1089.2 H301 V1093.3Z" fill="#c5cae9"/>
<path d="M19 1112.7 H25.7 Q26.5 1109 29.9 1109 Q33.3 1109 34.2 1112.7 H40.8" stroke="#f0f0f0" stroke-width="1.2" fill="none"/>
<path d="M15 1125.2 L29.5 1116.5 L44.7 1125.2 L29.9 1133.4Z" fill="#c4c4c4" /><path d="M15 1125.2 L29.9 1133.4 L29.9 1135.0 L15 1126.8Z" fill="#a0a0a0" /><path d="M44.7 1125.2 L29.9 1133.4 L29.9 1135.0 L44.7 1126.8Z" fill="#7c7c7c" />
<path d="M18.5 1123.5 Q18.5 1116 24 1115.5 L31 1119.5 Q25.5 1120.5 25.7 1127.6Z" fill="#9e9e9e"/><path d="M26.5 1128 Q26.5 1120.5 32 1120 L39.5 1124 Q34 1125 34.2 1132Z" fill="#8e8e8e"/><path d="M31 1119.5 Q25.5 1120.5 25.7 1127.6 L28 1126 Q28 1122 31 1119.5Z M39.5 1124 Q34 1125 34.2 1132 L36.5 1130.3 Q36.5 1126.5 39.5 1124Z" fill="#777"/>
<path d="M15.8 1124.5 L22.3 1128 L22.3 1130.8 L15.8 1127.2Z" fill="#e6e6e6" /><path d="M24 1129 L30.2 1132.5 L30.2 1135 L24 1131.6Z" fill="#e6e6e6" />
<path d="M61.1 1125.2 L75.9 1117.8 L91.1 1125.2 L75.9 1133Z" fill="#ffeb3b" /><path d="M61.1 1125.2 L75.9 1133 L75.9 1135 L61.1 1127.2Z" fill="#fbc02d" /><path d="M91.1 1125.2 L75.9 1133 L75.9 1135 L91.1 1127.2Z" fill="#fb8c00" />
<path d="M70.9 1119 V1124 Q75.5 1127 79.9 1124 V1119Z" fill="#ffa726"/><ellipse cx="75.4" cy="1119" rx="4.5" ry="2.3" fill="#ffd54f"/><ellipse cx="75.9" cy="1114.9" rx="4.9" ry="3.4" fill="none" stroke="#f0f0f0" stroke-width="1.5"/>
<g transform="translate(30 1222) scale(1.0)"><path d="M-15 -5 L-3 -12 Q2 -13 4 -9 L14 -4 L2 3 L-3 0 L-11 4Z" fill="#777"/><path d="M-3 -12 Q2 -13 4 -9 L-5 -4 Q-7 -8 -10 -8Z" fill="#9a9a9a"/><path d="M-13 4 L-5 8 L6 2 L14 5 V8 L-8 15 L-13 12Z" fill="#606060"/><path d="M6 2 L14 5 L10 7 L4 5Z" fill="#484848"/></g>
<g transform="translate(76 1222) scale(1.0)"><path d="M-15 1 L0 -6.5 L15 1 L0 8.5Z" fill="#5a5a5a"/><path d="M-15 1 L0 8.5 V11.0 L-15 3.5Z" fill="#4a4a4a"/><path d="M15 1 L0 8.5 V11.0 L15 3.5Z" fill="#404040"/><ellipse cx="-1" cy="0" rx="6" ry="3.6" fill="#4a4a4a"/><ellipse cx="-1" cy="-6" rx="6.5" ry="4" fill="none" stroke="#7a7a7a" stroke-width="1.7"/><path d="M4 -7 L10 -9" stroke="#7a7a7a" stroke-width="1.7"/></g>
<g transform="translate(122 1222) scale(1.0)"><path d="M-15 1 L0 -6.5 L15 1 L0 8.5Z" fill="#f44336"/><path d="M-15 1 L0 8.5 V11.0 L-15 3.5Z" fill="#d32f2f"/><path d="M15 1 L0 8.5 V11.0 L15 3.5Z" fill="#b71c1c"/><ellipse cx="-1" cy="0.5" rx="6" ry="3.6" fill="#e53935"/><ellipse cx="-1" cy="-0.5" rx="5" ry="2.6" fill="#ef5350"/><ellipse cx="0" cy="-6" rx="6.5" ry="4" fill="none" stroke="#9fa8da" stroke-width="1.8"/><path d="M-12.5 -9 L-5.5 -6.5" stroke="#9fa8da" stroke-width="1.8"/></g>
<g transform="translate(30 1296) scale(1.0)"><path d="M-14 -5 L-8.5 -12 H8.5 L14 -5 L0 13Z" fill="#e53935"/><path d="M-14 -5 L-8.5 -12 L-5 -5Z M5 -5 L8.5 -12 L14 -5Z" fill="#ef5350"/><path d="M-5 -5 L-8.5 -12 H-2.5 L-5 -5Z M5 -5 L2.5 -12 H8.5Z" fill="#c62828"/><path d="M-5 -5 L-2.5 -12 H2.5 L5 -5Z" fill="#e57373"/><path d="M-5 -5 L0 13 L5 -5Z" fill="#c62828"/><path d="M-14 -5 H-5 L0 13Z" fill="#ef5350"/><path d="M-14 -4.7 H14" stroke="#333" stroke-width="0.8"/><path d="M-5 -5 L0 13 L5 -5" stroke="#333" stroke-width="0.6" fill="none"/><polygon points="5.00,-0.50 7.85,1.57 10.71,3.65 9.62,7.00 8.53,10.35 5.00,10.35 1.47,10.35 0.38,7.00 -0.71,3.65 2.15,1.57" fill="none"/><path d="M5 -0.5 L10.7 3.7 L8.5 10.5 H1.5 L-0.7 3.7Z" fill="#333" stroke="#eee" stroke-width="1.4"/></g>
<g transform="translate(78 1296) scale(1.0)"><g transform="translate(1 0) scale(0.86 1)"><path d="M-14 -5 L-8.5 -12 H8.5 L14 -5 L0 13Z" fill="#e53935"/><path d="M-14 -5 L-8.5 -12 L-5 -5Z M5 -5 L8.5 -12 L14 -5Z" fill="#ef5350"/><path d="M-5 -5 L-8.5 -12 H-2.5 L-5 -5Z M5 -5 L2.5 -12 H8.5Z" fill="#c62828"/><path d="M-5 -5 L-2.5 -12 H2.5 L5 -5Z" fill="#e57373"/><path d="M-5 -5 L0 13 L5 -5Z" fill="#c62828"/><path d="M-14 -5 H-5 L0 13Z" fill="#ef5350"/><path d="M-14 -4.7 H14" stroke="#333" stroke-width="0.8"/><path d="M-5 -5 L0 13 L5 -5" stroke="#333" stroke-width="0.6" fill="none"/></g><rect x="-12" y="-12" width="5" height="5" fill="#333" stroke="#eee" stroke-width="1.5"/><path d="M-10.5 -3.5 L-6 1 M-10.5 1.3 H-5.7 V-3.5" stroke="#eee" stroke-width="1.5" fill="none"/></g>
<g transform="translate(122 1296) scale(1.0)"><path d="M-14 -5 L-8.5 -12 H8.5 L14 -5 L0 13Z" fill="#e53935"/><path d="M-14 -5 L-8.5 -12 L-5 -5Z M5 -5 L8.5 -12 L14 -5Z" fill="#ef5350"/><path d="M-5 -5 L-8.5 -12 H-2.5 L-5 -5Z M5 -5 L2.5 -12 H8.5Z" fill="#c62828"/><path d="M-5 -5 L-2.5 -12 H2.5 L5 -5Z" fill="#e57373"/><path d="M-5 -5 L0 13 L5 -5Z" fill="#c62828"/><path d="M-14 -5 H-5 L0 13Z" fill="#ef5350"/><path d="M-14 -4.7 H14" stroke="#333" stroke-width="0.8"/><path d="M-5 -5 L0 13 L5 -5" stroke="#333" stroke-width="0.6" fill="none"/><rect x="0.5" y="-1.5" width="12.5" height="13" fill="#333"/><path d="M1.5 0 H12.5 M1.5 2.8 H12.5 M1.5 5.6 H12.5 M1.5 8.4 H12.5 M1.5 11.2 H8" stroke="#eee" stroke-width="1.4"/></g>
<g transform="translate(168 1296) scale(1.0)"><path d="M-14 -5 L-8.5 -12 H8.5 L14 -5 L0 13Z" fill="#484848"/><path d="M-14 -5 L-8.5 -12 L-5 -5Z M5 -5 L8.5 -12 L14 -5Z" fill="#525252"/><path d="M-5 -5 L-8.5 -12 H-2.5 L-5 -5Z M5 -5 L2.5 -12 H8.5Z" fill="#3e3e3e"/><path d="M-5 -5 L-2.5 -12 H2.5 L5 -5Z" fill="#5a5a5a"/><path d="M-5 -5 L0 13 L5 -5Z" fill="#3e3e3e"/><path d="M-14 -5 H-5 L0 13Z" fill="#525252"/><path d="M-14 -4.7 H14" stroke="#333" stroke-width="0.8"/><path d="M-5 -5 L0 13 L5 -5" stroke="#333" stroke-width="0.6" fill="none"/></g>
<g transform="translate(214 1295.5) scale(1.0)"><clipPath id="cpbb"><circle r="15"/></clipPath><circle r="15" fill="#12a7f2"/><g clip-path="url(#cpbb)"><rect x="-4.7" y="-7.5" width="9.4" height="15" rx="1" fill="#1787c9"/><path d="M-2 -6 L2 6 L-2 6Z" fill="#3aa0dc"/><path d="M-4.7 -7.5 V7.5 M4.7 -7.5 V7.5 M-4.7 -7.5 H4.7 M-4.7 7.5 H4.7 M0 -15 V-7.5 M0 7.5 V15 M-4.7 -7.5 L-10 -11.5 M4.7 -7.5 L10 -11.5 M-4.7 7.5 L-10 11.5 M4.7 7.5 L10 11.5 M-15 -5 L-4.7 -5 M-15 5 L-4.7 5 M15 -5 H4.7 M15 5 H4.7" stroke="#b5e3fb" stroke-width="1.1" fill="none"/><path d="M-15 -5 Q-11 0 -15 5 M15 -5 Q11 0 15 5" stroke="#b5e3fb" stroke-width="1" fill="none"/></g></g>
<g transform="translate(405 132) scale(1.0)"><circle r="11.2" fill="none" stroke="#f2f2f2" stroke-width="1.7"/><path d="M8.3 8.3 L14.5 14.5" stroke="#f2f2f2" stroke-width="3.3" stroke-linecap="round"/><path d="M-6.5 0 H6.5 M0 -6.5 V6.5" stroke="#f2f2f2" stroke-width="1.6"/></g>
<g transform="translate(447 132) scale(1.0)"><circle r="11.2" fill="none" stroke="#f2f2f2" stroke-width="1.7"/><path d="M8.3 8.3 L14.5 14.5" stroke="#f2f2f2" stroke-width="3.3" stroke-linecap="round"/><path d="M-6.5 0 H6.5" stroke="#f2f2f2" stroke-width="1.6"/></g>
<g transform="translate(489 132) scale(1.0)"><circle r="11.2" fill="none" stroke="#f2f2f2" stroke-width="1.7"/><path d="M8.3 8.3 L14.5 14.5" stroke="#f2f2f2" stroke-width="3.3" stroke-linecap="round"/><path d="M5.5 2.5 Q8.5 -4 2 -4.5 Q-2.5 -4.5 -6 0.5" stroke="#f2f2f2" stroke-width="1.5" fill="none"/><path d="M-8 -1.5 V4 H-2.5Z" fill="#f2f2f2"/></g>
<g transform="translate(539 132) scale(1.0)"><circle r="11.2" fill="none" stroke="#f2f2f2" stroke-width="1.7"/><path d="M8.3 8.3 L14.5 14.5" stroke="#f2f2f2" stroke-width="3.3" stroke-linecap="round"/><text x="0" y="4.2" font-family="Liberation Serif" font-weight="bold" font-size="12.5" fill="#f2f2f2" text-anchor="middle">1:1</text></g>
<g transform="translate(581.5 132) scale(1.0)"><circle r="11.2" fill="none" stroke="#f2f2f2" stroke-width="1.7"/><path d="M8.3 8.3 L14.5 14.5" stroke="#f2f2f2" stroke-width="3.3" stroke-linecap="round"/><rect x="-6" y="-4.5" width="12" height="9" fill="none" stroke="#f2f2f2" stroke-width="1.7"/></g>
<g transform="translate(623 132) scale(1.0)"><circle r="11.2" fill="none" stroke="#5c5c5c" stroke-width="1.1"/><path d="M8.3 8.3 L14.5 14.5" stroke="#5c5c5c" stroke-width="2.6" stroke-linecap="round"/><path d="M-5.5 -5.5 L5.5 5.5 M5.5 -5.5 L-5.5 5.5 M-5.5 -2 V-5.5 H-2 M2 -5.5 H5.5 V-2 M5.5 2 V5.5 H2 M-2 5.5 H-5.5 V2" stroke="#5c5c5c" stroke-width="1.2" fill="none"/></g>
<g transform="translate(672 131) scale(1.0)"><polygon points="0.00,-11.30 3.06,-4.21 10.75,-3.49 4.95,1.61 6.64,9.14 0.00,5.20 -6.64,9.14 -4.95,1.61 -10.75,-3.49 -3.06,-4.21" fill="#fdd022"/><circle cx="5.8" cy="9" r="6.3" fill="#333"/><circle cx="5.8" cy="9" r="5.5" fill="none" stroke="#f2f2f2" stroke-width="1.5"/><path d="M5.8 9 L1.5 7 A5 5 0 0 1 6.3 4.2Z" fill="#fdd022"/><path d="M9.8 13.2 L14 17" stroke="#f2f2f2" stroke-width="1.7"/></g>
<rect x="1593" y="178.5" width="13.3" height="28.5" rx="2.5" fill="#c5cae9"/><rect x="1611.7" y="178.5" width="13.3" height="28.5" rx="2.5" fill="#c5cae9"/>
<path d="M1608.9 177 V190.5 M1608.9 196 V208.7" stroke="#e53935" stroke-width="1.9"/><circle cx="1608.9" cy="193.2" r="1.7" fill="#fff"/>
<path d="M1594 297.5 Q1594 296.5 1595.5 296.5 H1599 Q1600.3 296.5 1600.3 297.5 V308.5 H1611.3 V297.5 Q1611.3 296.5 1612.5 296.5 H1616 Q1617.5 296.5 1617.5 297.5 V311 Q1617.5 312.2 1616 312.2 H1595.5 Q1594 312.2 1594 311Z" fill="#c5cae9"/>
<path d="M1600.8 284 H1607.1 V306.15000000000003 A3.15 3.15 0 0 1 1600.8 306.15000000000003Z" fill="#f2f2f2"/><path d="M1600.8 287.0 L1604.2649999999999 289.2 L1600.8 291.0Z" fill="#333"/><path d="M1600.8 293.43333333333334 L1604.2649999999999 295.6333333333333 L1600.8 297.43333333333334Z" fill="#333"/><path d="M1600.8 299.8666666666667 L1604.2649999999999 302.06666666666666 L1600.8 303.8666666666667Z" fill="#333"/>
<path d="M1622 297.5 V309.5 M1619 306.5 L1622 310 L1625 306.5" stroke="#ef4444" stroke-width="1.4" fill="none"/>
<path d="M1593 439 Q1593 437 1595 437 H1601 L1605 441 H1623 Q1625 441 1625 443 V462 Q1625 464 1623 464 H1595 Q1593 464 1593 462Z" fill="#ffdf80"/>
<path d="M1610 451 L1613 446 L1617 444.5 L1622.5 447.5 L1624.3 452 L1622.5 466 Q1617 470.5 1611.5 466Z" fill="#222"/><path d="M1611.3 451 L1613.8 447 L1617 446 L1621.5 448.3 L1623 452 L1621.5 465 Q1617 468.7 1612.8 465Z" fill="#ececec"/><path d="M1613.8 447 L1621.5 448.3 L1615 456 L1612.2 458Z M1622.5 455.5 L1617.5 461.5 L1621.8 463.5Z" fill="#9a9a9a"/>
<path d="M1595 498.5 L1610 485.5 L1627.5 495.5 L1609 506.7Z" fill="#c5cae9"/><path d="M1595 498.5 L1609 506.7 V510.2 L1595 502Z" fill="#7986cb"/><path d="M1627.5 495.5 L1609 506.7 V510.2 L1627.5 499Z" fill="#5c6bc0"/>
<path d="M1594.5 486 V497.5 Q1600 502 1605.8 497.5 V486Z" fill="#d32f2f"/><ellipse cx="1600.2" cy="486" rx="5.7" ry="2.8" fill="#ef5350"/><path d="M1605.8 489 L1610 488 L1611 491 L1605.8 496.5Z" fill="#3f51b5"/>
<path d="M1604 495.5 L1611 492.5 L1610 490.8 L1615.5 490.3 L1614 495.8 L1612.8 494.2 L1606.5 498.3Z" fill="#f4f4f4" stroke="#333" stroke-width="0.8"/>
<path d="M1593.5 530 V546 Q1593.5 548.5 1596 548.5 H1600 M1597.5 545.7 L1600.5 548.5 L1597.5 551.3" stroke="#00c853" stroke-width="1.4" fill="none"/>
<path d="M1603.7 531 H1610.3 V553.2 A3.3 3.3 0 0 1 1603.7 553.2Z" fill="#f2f2f2"/><path d="M1603.7 534.0 L1607.3300000000002 536.2 L1603.7 538.0Z" fill="#333"/><path d="M1603.7 540.5 L1607.3300000000002 542.7 L1603.7 544.5Z" fill="#333"/><path d="M1603.7 547.0 L1607.3300000000002 549.2 L1603.7 551.0Z" fill="#333"/>
<path d="M1612 548.5 H1618.5 Q1620.5 548.5 1620.5 546.5 V531 M1617.7 533.8 L1620.5 530.5 L1623.3 533.8" stroke="#ef5350" stroke-width="1.4" fill="none"/>
<path d="M1593.8 573.7 H1600.3999999999999 V595.7 A3.3 3.3 0 0 1 1593.8 595.7Z" fill="#f2f2f2"/><path d="M1593.8 576.7 L1597.43 578.9000000000001 L1593.8 580.7Z" fill="#333"/><path d="M1593.8 583.1333333333333 L1597.43 585.3333333333334 L1593.8 587.1333333333333Z" fill="#333"/><path d="M1593.8 589.5666666666667 L1597.43 591.7666666666668 L1593.8 593.5666666666667Z" fill="#333"/>
<path d="M1602.8 585.5 L1621 603 M1616.8 603.5 H1621.5 V598.8" stroke="#00c853" stroke-width="1.5" fill="none"/>
<rect x="1593.8" y="630" width="26.3" height="26" rx="2.5" fill="#c5cae9"/>
<path d="M1596.8 617.8 H1609.6 Q1607.6 622.7 1609.6 627.6 H1596.8 Q1598.8 622.7 1596.8 617.8Z" fill="#f2f2f2"/>
<path d="M1621.8 637 H1632.6 V649.2 H1621.8 Q1624.3 643 1621.8 637Z" fill="#f2f2f2"/><path d="M1632.6 637 Q1630.3 643 1632.6 649.2Z" fill="#333"/>
<path d="M1593.5 622.7 H1596 M1610 622.7 H1620.5 Q1627 622.7 1627 629 V636.5 M1627 650 V656.5" stroke="#ef4444" stroke-width="1.5" fill="none"/>
<rect x="1594.2" y="731.2" width="10.8" height="10.8" rx="1.8" fill="none" stroke="#ef4444" stroke-width="2.2"/><rect x="1597.5" y="750" width="10.8" height="10.8" rx="1.8" fill="none" stroke="#ef4444" stroke-width="2.2"/><circle cx="1616.4" cy="742.5" r="7.2" fill="none" stroke="#ef4444" stroke-width="2.2"/>
<path d="M1607 736.5 L1616.5 742.5 L1617 747 L1609.5 755" stroke="#f2f2f2" stroke-width="2.2" stroke-dasharray="2 2.6" fill="none"/>
<path d="M1606 773 H1612.3 V782.85 A3.15 3.15 0 0 1 1606 782.85Z" fill="#f2f2f2"/><path d="M1606 776.0 L1609.465 778.2 L1606 780.0Z" fill="#333"/>
<path d="M1609 789.5 V801 M1605.8 792.3 L1609 788.6 L1612.2 792.3 M1605.8 798.2 L1609 802 L1612.2 798.2" stroke="#ef4444" stroke-width="1.4" fill="none"/>
<path d="M1595.6 804 H1622.4 V807.5 Q1622.4 810.3 1619.5 810.3 H1598.5 Q1595.6 810.3 1595.6 807.5Z" fill="#c5cae9"/>
<path d="M1590.5 835.5 L1609 824.5 L1627.5 836.5 L1609 848Z" fill="#c5cae9"/><path d="M1590.5 835.5 L1609 848 V851.8 L1590.5 839.5Z" fill="#7986cb"/><path d="M1627.5 836.5 L1609 848 V851.8 L1627.5 840.5Z" fill="#5c6bc0"/>
<rect x="1614.5" y="822" width="8.6" height="32" fill="#f4f4f4"/>
<path d="M1616 825.0 H1619 M1616 828.2 H1619 M1616 831.4 H1619 M1616 834.6 H1619 M1616 837.8 H1621 M1616 841.0 H1619 M1616 844.2 H1619 M1616 847.4 H1619 M1616 850.6 H1619 " stroke="#bdbdbd" stroke-width="1"/>
<rect x="1593" y="1270" width="16.5" height="22.5" rx="1.5" fill="#e8eaf6"/><rect x="1594.98" y="1272.025" width="12.540000000000001" height="3.825" fill="#5c6bc0"/><rect x="1594.98" y="1278.10" width="3.30" height="2.93" fill="#9fa8da"/><rect x="1599.60" y="1278.10" width="3.30" height="2.93" fill="#9fa8da"/><rect x="1604.22" y="1278.10" width="3.30" height="2.93" fill="#9fa8da"/><rect x="1594.98" y="1282.60" width="3.30" height="2.93" fill="#9fa8da"/><rect x="1599.60" y="1282.60" width="3.30" height="2.93" fill="#9fa8da"/><rect x="1604.22" y="1282.60" width="3.30" height="2.93" fill="#9fa8da"/><rect x="1594.98" y="1287.10" width="3.30" height="2.93" fill="#9fa8da"/><rect x="1599.60" y="1287.10" width="3.30" height="2.93" fill="#9fa8da"/><rect x="1604.22" y="1287.10" width="3.30" height="2.93" fill="#9fa8da"/>
<path d="M2092 114.5 H2104 L2110 120.5 V137.8 H2092Z" fill="#e9edf0"/><path d="M2104 114.5 L2110 120.5 H2104Z" fill="#b5c3cc"/>
<path d="M2110 161.7 H2099.7 L2110 151.39999999999998Z" fill="#f2f2f2"/>
<path d="M2130 158.3 H2122.9 V144.8 H2136.5 V148.5" fill="none" stroke="#e4e4e4" stroke-width="1.3"/><circle cx="2136.7" cy="157.8" r="8.3" fill="#333" stroke="#e4e4e4" stroke-width="1.4"/><path d="M2136.7 152 V157.8 H2131.5" fill="none" stroke="#e4e4e4" stroke-width="1.3"/>
<path d="M2474.3 156 H2495.7 M2485 145.3 V166.7" stroke="#fff" stroke-width="2.8"/>
<g transform="translate(2510.4 145.7)"><path d="M-3 20.5 V17 C-3 14 -7.3 12 -7.3 7.3 A7.3 7.3 0 1 1 7.3 7.3 C7.3 12 3 14 3 17 V20.5Z" fill="none" stroke="#b0bec5" stroke-width="1.4"/><rect x="-3.2" y="20.6" width="6.4" height="2.6" fill="#a1887f"/></g><g transform="translate(2519.6 142.8)"><path d="M-3 20.5 V17 C-3 14 -7.3 12 -7.3 7.3 A7.3 7.3 0 1 1 7.3 7.3 C7.3 12 3 14 3 17 V20.5Z" fill="none" stroke="#fccc1c" stroke-width="1.4"/><rect x="-3.2" y="20.6" width="6.4" height="2.6" fill="#a1887f"/></g>
<circle cx="2169.8" cy="186" r="11.3" fill="#050505" stroke="#4a4a4a" stroke-width="1"/>
<g transform="translate(2455 186)"><path d="M6.7 -3 V-7.2 A6.2 6.2 0 0 0 -5.2 -9.6" fill="none" stroke="#b0bec5" stroke-width="2.6"/><rect x="-11" y="-3" width="22" height="15" fill="#b0bec5"/><circle cx="0" cy="3" r="2.6" fill="#333"/><rect x="-1.2" y="4" width="2.4" height="5" fill="#333"/></g>
<g transform="translate(2485 186)"><path d="M-7.4 -12.8 V-7 M-7.4 -4.5 V1.6 M-2.7 6.7 H3.3 M6 6.7 H12" stroke="#f2f2f2" stroke-width="3.2"/><path d="M-12.2 6.7 H-7.4 V10.9" stroke="#f2f2f2" stroke-width="3.2" fill="none"/><path d="M-1.5 1 L1.5 -9.3 L4.3 -6.5 L9.3 -11.5 L11.6 -9.2 L6.6 -4.2 L9 -1.8Z" fill="#f2f2f2"/></g>
<circle cx="2169.8" cy="216" r="11.3" fill="#050505" stroke="#4a4a4a" stroke-width="1"/>
<g transform="translate(2455 216)"><path d="M6.7 -3 V-7.2 A6.2 6.2 0 0 0 -5.2 -9.6" fill="none" stroke="#b0bec5" stroke-width="2.6"/><rect x="-11" y="-3" width="22" height="15" fill="#b0bec5"/><circle cx="0" cy="3" r="2.6" fill="#333"/><rect x="-1.2" y="4" width="2.4" height="5" fill="#333"/></g>
<g transform="translate(2485 216)"><path d="M-7.4 -12.8 V-7 M-7.4 -4.5 V1.6 M-2.7 6.7 H3.3 M6 6.7 H12" stroke="#f2f2f2" stroke-width="3.2"/><path d="M-12.2 6.7 H-7.4 V10.9" stroke="#f2f2f2" stroke-width="3.2" fill="none"/><path d="M-1.5 1 L1.5 -9.3 L4.3 -6.5 L9.3 -11.5 L11.6 -9.2 L6.6 -4.2 L9 -1.8Z" fill="#f2f2f2"/></g>
<g transform="translate(2514.9 174)"><path d="M-3 20.5 V17 C-3 14 -7.3 12 -7.3 7.3 A7.3 7.3 0 1 1 7.3 7.3 C7.3 12 3 14 3 17 V20.5Z" fill="none" stroke="#b0bec5" stroke-width="1.4"/><rect x="-3.2" y="20.6" width="6.4" height="2.6" fill="#a1887f"/></g>
<g transform="translate(2514.9 204)"><path d="M-3 20.5 V17 C-3 14 -7.3 12 -7.3 7.3 A7.3 7.3 0 1 1 7.3 7.3 C7.3 12 3 14 3 17 V20.5Z" fill="none" stroke="#fccc1c" stroke-width="1.4"/><rect x="-3.2" y="20.6" width="6.4" height="2.6" fill="#a1887f"/></g>
<path d="M2103.2 240.6 L2109.3 246.6 L2103.2 252.6Z" fill="none" stroke="#f2f2f2" stroke-width="1.2"/>
<rect x="2122" y="234.3" width="14.7" height="14.5" fill="#689f38"/><circle cx="2136.8" cy="249" r="9" fill="#8bc34a"/><circle cx="2136.8" cy="249" r="9.6" fill="none" stroke="#333" stroke-width="1.2"/>
<path d="M2474.3 246 H2495.7 M2485 235.3 V256.7" stroke="#fff" stroke-width="2.8"/>
<g transform="translate(2510.4 235.7)"><path d="M-3 20.5 V17 C-3 14 -7.3 12 -7.3 7.3 A7.3 7.3 0 1 1 7.3 7.3 C7.3 12 3 14 3 17 V20.5Z" fill="#f7c21a"/><rect x="-3.2" y="20.6" width="6.4" height="2.6" fill="#a1887f"/></g><path d="" /><g transform="translate(2519.6 232.8)"><path d="M-3 20.5 V17 C-3 14 -7.3 12 -7.3 7.3 A7.3 7.3 0 1 1 7.3 7.3 C7.3 12 3 14 3 17 V20.5Z" fill="#facf1e"/><rect x="-3.2" y="20.6" width="6.4" height="2.6" fill="#a1887f"/></g>
<polygon points="2134.00,263.80 2137.53,271.65 2146.08,272.58 2139.71,278.35 2141.46,286.77 2134.00,282.50 2126.54,286.77 2128.29,278.35 2121.92,272.58 2130.47,271.65" fill="#fcc21b"/>
<polygon points="2134.00,293.80 2137.53,301.65 2146.08,302.58 2139.71,308.35 2141.46,316.77 2134.00,312.50 2126.54,316.77 2128.29,308.35 2121.92,302.58 2130.47,301.65" fill="#fcc21b"/>
<polygon points="2134.00,323.80 2137.53,331.65 2146.08,332.58 2139.71,338.35 2141.46,346.77 2134.00,342.50 2126.54,346.77 2128.29,338.35 2121.92,332.58 2130.47,331.65" fill="#29b6f6"/>
<path d="M2103.2 270.6 L2109.3 276.6 L2103.2 282.6Z" fill="none" stroke="#f2f2f2" stroke-width="1.2"/>
<path d="M2444.3 276 H2465.7 M2455 265.3 V286.7" stroke="#fff" stroke-width="2.8"/>
<path d="M2472.8 269.5 H2483.8 M2478.3 264.0 V275.0" stroke="#fff" stroke-width="1.5"/><path d="M2472.8 283 H2483.8 M2478.3 277.5 V288.5" stroke="#fff" stroke-width="1.5"/><path d="M2486.2 269.5 H2497.2 M2491.7 264.0 V275.0" stroke="#fff" stroke-width="1.5"/><path d="M2486.2 283 H2497.2 M2491.7 277.5 V288.5" stroke="#fff" stroke-width="1.5"/>
<g transform="translate(2510.4 265.7)"><path d="M-3 20.5 V17 C-3 14 -7.3 12 -7.3 7.3 A7.3 7.3 0 1 1 7.3 7.3 C7.3 12 3 14 3 17 V20.5Z" fill="#f7c21a"/><rect x="-3.2" y="20.6" width="6.4" height="2.6" fill="#a1887f"/></g><path d="" /><g transform="translate(2519.6 262.8)"><path d="M-3 20.5 V17 C-3 14 -7.3 12 -7.3 7.3 A7.3 7.3 0 1 1 7.3 7.3 C7.3 12 3 14 3 17 V20.5Z" fill="#facf1e"/><rect x="-3.2" y="20.6" width="6.4" height="2.6" fill="#a1887f"/></g>
<path d="M2103.2 300.6 L2109.3 306.6 L2103.2 312.6Z" fill="none" stroke="#f2f2f2" stroke-width="1.2"/>
<path d="M2444.3 306 H2465.7 M2455 295.3 V316.7" stroke="#fff" stroke-width="2.8"/>
<path d="M2472.8 299.5 H2483.8 M2478.3 294.0 V305.0" stroke="#fff" stroke-width="1.5"/><path d="M2472.8 313 H2483.8 M2478.3 307.5 V318.5" stroke="#fff" stroke-width="1.5"/><path d="M2486.2 299.5 H2497.2 M2491.7 294.0 V305.0" stroke="#fff" stroke-width="1.5"/><path d="M2486.2 313 H2497.2 M2491.7 307.5 V318.5" stroke="#fff" stroke-width="1.5"/>
<g transform="translate(2510.4 295.7)"><path d="M-3 20.5 V17 C-3 14 -7.3 12 -7.3 7.3 A7.3 7.3 0 1 1 7.3 7.3 C7.3 12 3 14 3 17 V20.5Z" fill="#f7c21a"/><rect x="-3.2" y="20.6" width="6.4" height="2.6" fill="#a1887f"/></g><path d="" /><g transform="translate(2519.6 292.8)"><path d="M-3 20.5 V17 C-3 14 -7.3 12 -7.3 7.3 A7.3 7.3 0 1 1 7.3 7.3 C7.3 12 3 14 3 17 V20.5Z" fill="#facf1e"/><rect x="-3.2" y="20.6" width="6.4" height="2.6" fill="#a1887f"/></g>
<g transform="translate(2510.4 325.7)"><path d="M-3 20.5 V17 C-3 14 -7.3 12 -7.3 7.3 A7.3 7.3 0 1 1 7.3 7.3 C7.3 12 3 14 3 17 V20.5Z" fill="#f7c21a"/><rect x="-3.2" y="20.6" width="6.4" height="2.6" fill="#a1887f"/></g><path d="" /><g transform="translate(2519.6 322.8)"><path d="M-3 20.5 V17 C-3 14 -7.3 12 -7.3 7.3 A7.3 7.3 0 1 1 7.3 7.3 C7.3 12 3 14 3 17 V20.5Z" fill="#facf1e"/><rect x="-3.2" y="20.6" width="6.4" height="2.6" fill="#a1887f"/></g>
<path d="M2103.2 360.6 L2109.3 366.6 L2103.2 372.6Z" fill="none" stroke="#f2f2f2" stroke-width="1.2"/>
<rect x="2122" y="354" width="10.4" height="10.3" fill="#f2f2f2"/><rect x="2136" y="354" width="10.5" height="10.3" fill="#f2f2f2"/><rect x="2136" y="367.6" width="10.5" height="10" fill="#f2f2f2"/>
<path d="M2504.3 366 H2525.7 M2515 355.3 V376.7" stroke="#fff" stroke-width="2.8"/>
<path d="M2110 402 H2099.7 L2110 391.7Z" fill="#f2f2f2"/>
<clipPath id="cpem"><path d="M2129 384 H2139 V402.5 A5 5 0 0 1 2129 402.5Z"/></clipPath><g clip-path="url(#cpem)"><rect x="2129" y="384" width="10" height="24" fill="#f4f4f4"/><path d="M2128 386 L2140 393 M2128 393 L2140 400 M2128 400 L2140 407" stroke="#8a8a8a" stroke-width="2.4"/></g>
<g transform="translate(2451 385.7)"><path d="M-3 20.5 V17 C-3 14 -7.3 12 -7.3 7.3 A7.3 7.3 0 1 1 7.3 7.3 C7.3 12 3 14 3 17 V20.5Z" fill="none" stroke="#b0bec5" stroke-width="1.4"/><rect x="-3.2" y="20.6" width="6.4" height="2.6" fill="#a1887f"/></g><g transform="translate(2459.5 382.8)"><path d="M-3 20.5 V17 C-3 14 -7.3 12 -7.3 7.3 A7.3 7.3 0 1 1 7.3 7.3 C7.3 12 3 14 3 17 V20.5Z" fill="none" stroke="#fccc1c" stroke-width="1.4"/><rect x="-3.2" y="20.6" width="6.4" height="2.6" fill="#a1887f"/></g>
<g transform="translate(2481 385.7)"><path d="M-3 20.5 V17 C-3 14 -7.3 12 -7.3 7.3 A7.3 7.3 0 1 1 7.3 7.3 C7.3 12 3 14 3 17 V20.5Z" fill="#a4b4bc"/><rect x="-3.2" y="20.6" width="6.4" height="2.6" fill="#a1887f"/></g><g transform="translate(2490 382.8)"><path d="M-3 20.5 V17 C-3 14 -7.3 12 -7.3 7.3 A7.3 7.3 0 1 1 7.3 7.3 C7.3 12 3 14 3 17 V20.5Z" fill="#b0bec5"/><rect x="-3.2" y="20.6" width="6.4" height="2.6" fill="#a1887f"/></g>
<g transform="translate(2510.4 385.7)"><path d="M-3 20.5 V17 C-3 14 -7.3 12 -7.3 7.3 A7.3 7.3 0 1 1 7.3 7.3 C7.3 12 3 14 3 17 V20.5Z" fill="#a4b4bc"/><rect x="-3.2" y="20.6" width="6.4" height="2.6" fill="#a1887f"/></g><g transform="translate(2519.6 382.8)"><path d="M-3 20.5 V17 C-3 14 -7.3 12 -7.3 7.3 A7.3 7.3 0 1 1 7.3 7.3 C7.3 12 3 14 3 17 V20.5Z" fill="#facf1e"/><rect x="-3.2" y="20.6" width="6.4" height="2.6" fill="#a1887f"/></g>
<path d="M2136.7 420.7 L2142.8 426.7 L2136.7 432.7Z" fill="none" stroke="#f2f2f2" stroke-width="1.2"/>
<g transform="translate(2167 426) scale(1.0) rotate(-45)"><path d="M-8.70 8.8 V-8.8 H-4.35 V8.8 H0.00 V-8.8 H4.35 V8.8 H8.70 V-8.8" fill="none" stroke="#e57373" stroke-width="1.5" stroke-linejoin="miter"/></g>
<g transform="translate(2451 415.7)"><path d="M-3 20.5 V17 C-3 14 -7.3 12 -7.3 7.3 A7.3 7.3 0 1 1 7.3 7.3 C7.3 12 3 14 3 17 V20.5Z" fill="none" stroke="#b0bec5" stroke-width="1.4"/><rect x="-3.2" y="20.6" width="6.4" height="2.6" fill="#a1887f"/></g><g transform="translate(2459.5 412.8)"><path d="M-3 20.5 V17 C-3 14 -7.3 12 -7.3 7.3 A7.3 7.3 0 1 1 7.3 7.3 C7.3 12 3 14 3 17 V20.5Z" fill="none" stroke="#b0bec5" stroke-width="1.4"/><rect x="-3.2" y="20.6" width="6.4" height="2.6" fill="#a1887f"/></g>
<g transform="translate(2481 415.7)"><path d="M-3 20.5 V17 C-3 14 -7.3 12 -7.3 7.3 A7.3 7.3 0 1 1 7.3 7.3 C7.3 12 3 14 3 17 V20.5Z" fill="#a4b4bc"/><rect x="-3.2" y="20.6" width="6.4" height="2.6" fill="#a1887f"/></g><g transform="translate(2490 412.8)"><path d="M-3 20.5 V17 C-3 14 -7.3 12 -7.3 7.3 A7.3 7.3 0 1 1 7.3 7.3 C7.3 12 3 14 3 17 V20.5Z" fill="#b0bec5"/><rect x="-3.2" y="20.6" width="6.4" height="2.6" fill="#a1887f"/></g>
<g transform="translate(2510.4 415.7)"><path d="M-3 20.5 V17 C-3 14 -7.3 12 -7.3 7.3 A7.3 7.3 0 1 1 7.3 7.3 C7.3 12 3 14 3 17 V20.5Z" fill="#a4b4bc"/><rect x="-3.2" y="20.6" width="6.4" height="2.6" fill="#a1887f"/></g><g transform="translate(2519.6 412.8)"><path d="M-3 20.5 V17 C-3 14 -7.3 12 -7.3 7.3 A7.3 7.3 0 1 1 7.3 7.3 C7.3 12 3 14 3 17 V20.5Z" fill="#b0bec5"/><rect x="-3.2" y="20.6" width="6.4" height="2.6" fill="#a1887f"/></g>
<path d="M2136.7 450.7 L2142.8 456.7 L2136.7 462.7Z" fill="none" stroke="#f2f2f2" stroke-width="1.2"/>
<g transform="translate(2167 456) scale(1.0) rotate(-45)"><path d="M-8.70 8.8 V-8.8 H-4.35 V8.8 H0.00 V-8.8 H4.35 V8.8 H8.70 V-8.8" fill="none" stroke="#e57373" stroke-width="1.5" stroke-linejoin="miter"/></g>
<g transform="translate(2451 445.7)"><path d="M-3 20.5 V17 C-3 14 -7.3 12 -7.3 7.3 A7.3 7.3 0 1 1 7.3 7.3 C7.3 12 3 14 3 17 V20.5Z" fill="none" stroke="#b0bec5" stroke-width="1.4"/><rect x="-3.2" y="20.6" width="6.4" height="2.6" fill="#a1887f"/></g><g transform="translate(2459.5 442.8)"><path d="M-3 20.5 V17 C-3 14 -7.3 12 -7.3 7.3 A7.3 7.3 0 1 1 7.3 7.3 C7.3 12 3 14 3 17 V20.5Z" fill="none" stroke="#b0bec5" stroke-width="1.4"/><rect x="-3.2" y="20.6" width="6.4" height="2.6" fill="#a1887f"/></g>
<g transform="translate(2481 445.7)"><path d="M-3 20.5 V17 C-3 14 -7.3 12 -7.3 7.3 A7.3 7.3 0 1 1 7.3 7.3 C7.3 12 3 14 3 17 V20.5Z" fill="#a4b4bc"/><rect x="-3.2" y="20.6" width="6.4" height="2.6" fill="#a1887f"/></g><g transform="translate(2490 442.8)"><path d="M-3 20.5 V17 C-3 14 -7.3 12 -7.3 7.3 A7.3 7.3 0 1 1 7.3 7.3 C7.3 12 3 14 3 17 V20.5Z" fill="#b0bec5"/><rect x="-3.2" y="20.6" width="6.4" height="2.6" fill="#a1887f"/></g>
<g transform="translate(2510.4 445.7)"><path d="M-3 20.5 V17 C-3 14 -7.3 12 -7.3 7.3 A7.3 7.3 0 1 1 7.3 7.3 C7.3 12 3 14 3 17 V20.5Z" fill="#a4b4bc"/><rect x="-3.2" y="20.6" width="6.4" height="2.6" fill="#a1887f"/></g><g transform="translate(2519.6 442.8)"><path d="M-3 20.5 V17 C-3 14 -7.3 12 -7.3 7.3 A7.3 7.3 0 1 1 7.3 7.3 C7.3 12 3 14 3 17 V20.5Z" fill="#b0bec5"/><rect x="-3.2" y="20.6" width="6.4" height="2.6" fill="#a1887f"/></g>
<path d="M2136.7 480.7 L2142.8 486.7 L2136.7 492.7Z" fill="none" stroke="#f2f2f2" stroke-width="1.2"/>
<g transform="translate(2167 486) scale(1.0) rotate(-45)"><path d="M-8.70 8.8 V-8.8 H-4.35 V8.8 H0.00 V-8.8 H4.35 V8.8 H8.70 V-8.8" fill="none" stroke="#e57373" stroke-width="1.5" stroke-linejoin="miter"/></g>
<g transform="translate(2451 475.7)"><path d="M-3 20.5 V17 C-3 14 -7.3 12 -7.3 7.3 A7.3 7.3 0 1 1 7.3 7.3 C7.3 12 3 14 3 17 V20.5Z" fill="none" stroke="#b0bec5" stroke-width="1.4"/><rect x="-3.2" y="20.6" width="6.4" height="2.6" fill="#a1887f"/></g><g transform="translate(2459.5 472.8)"><path d="M-3 20.5 V17 C-3 14 -7.3 12 -7.3 7.3 A7.3 7.3 0 1 1 7.3 7.3 C7.3 12 3 14 3 17 V20.5Z" fill="none" stroke="#b0bec5" stroke-width="1.4"/><rect x="-3.2" y="20.6" width="6.4" height="2.6" fill="#a1887f"/></g>
<g transform="translate(2481 475.7)"><path d="M-3 20.5 V17 C-3 14 -7.3 12 -7.3 7.3 A7.3 7.3 0 1 1 7.3 7.3 C7.3 12 3 14 3 17 V20.5Z" fill="#a4b4bc"/><rect x="-3.2" y="20.6" width="6.4" height="2.6" fill="#a1887f"/></g><g transform="translate(2490 472.8)"><path d="M-3 20.5 V17 C-3 14 -7.3 12 -7.3 7.3 A7.3 7.3 0 1 1 7.3 7.3 C7.3 12 3 14 3 17 V20.5Z" fill="#b0bec5"/><rect x="-3.2" y="20.6" width="6.4" height="2.6" fill="#a1887f"/></g>
<g transform="translate(2510.4 475.7)"><path d="M-3 20.5 V17 C-3 14 -7.3 12 -7.3 7.3 A7.3 7.3 0 1 1 7.3 7.3 C7.3 12 3 14 3 17 V20.5Z" fill="#a4b4bc"/><rect x="-3.2" y="20.6" width="6.4" height="2.6" fill="#a1887f"/></g><g transform="translate(2519.6 472.8)"><path d="M-3 20.5 V17 C-3 14 -7.3 12 -7.3 7.3 A7.3 7.3 0 1 1 7.3 7.3 C7.3 12 3 14 3 17 V20.5Z" fill="#b0bec5"/><rect x="-3.2" y="20.6" width="6.4" height="2.6" fill="#a1887f"/></g>
<path d="M2136.7 510.70000000000005 L2142.8 516.7 L2136.7 522.7Z" fill="none" stroke="#f2f2f2" stroke-width="1.2"/>
<g transform="translate(2167 516) scale(1.0) rotate(-45)"><path d="M-8.70 8.8 V-8.8 H-4.35 V8.8 H0.00 V-8.8 H4.35 V8.8 H8.70 V-8.8" fill="none" stroke="#e57373" stroke-width="1.5" stroke-linejoin="miter"/></g>
<g transform="translate(2451 505.7)"><path d="M-3 20.5 V17 C-3 14 -7.3 12 -7.3 7.3 A7.3 7.3 0 1 1 7.3 7.3 C7.3 12 3 14 3 17 V20.5Z" fill="none" stroke="#b0bec5" stroke-width="1.4"/><rect x="-3.2" y="20.6" width="6.4" height="2.6" fill="#a1887f"/></g><g transform="translate(2459.5 502.8)"><path d="M-3 20.5 V17 C-3 14 -7.3 12 -7.3 7.3 A7.3 7.3 0 1 1 7.3 7.3 C7.3 12 3 14 3 17 V20.5Z" fill="none" stroke="#b0bec5" stroke-width="1.4"/><rect x="-3.2" y="20.6" width="6.4" height="2.6" fill="#a1887f"/></g>
<g transform="translate(2481 505.7)"><path d="M-3 20.5 V17 C-3 14 -7.3 12 -7.3 7.3 A7.3 7.3 0 1 1 7.3 7.3 C7.3 12 3 14 3 17 V20.5Z" fill="#a4b4bc"/><rect x="-3.2" y="20.6" width="6.4" height="2.6" fill="#a1887f"/></g><g transform="translate(2490 502.8)"><path d="M-3 20.5 V17 C-3 14 -7.3 12 -7.3 7.3 A7.3 7.3 0 1 1 7.3 7.3 C7.3 12 3 14 3 17 V20.5Z" fill="#b0bec5"/><rect x="-3.2" y="20.6" width="6.4" height="2.6" fill="#a1887f"/></g>
<g transform="translate(2510.4 505.7)"><path d="M-3 20.5 V17 C-3 14 -7.3 12 -7.3 7.3 A7.3 7.3 0 1 1 7.3 7.3 C7.3 12 3 14 3 17 V20.5Z" fill="#a4b4bc"/><rect x="-3.2" y="20.6" width="6.4" height="2.6" fill="#a1887f"/></g><g transform="translate(2519.6 502.8)"><path d="M-3 20.5 V17 C-3 14 -7.3 12 -7.3 7.3 A7.3 7.3 0 1 1 7.3 7.3 C7.3 12 3 14 3 17 V20.5Z" fill="#b0bec5"/><rect x="-3.2" y="20.6" width="6.4" height="2.6" fill="#a1887f"/></g>
<path d="M2136.7 540.7 L2142.8 546.7 L2136.7 552.7Z" fill="none" stroke="#f2f2f2" stroke-width="1.2"/>
<g transform="translate(2167 546) scale(1.0) rotate(-45)"><path d="M-8.70 8.8 V-8.8 H-4.35 V8.8 H0.00 V-8.8 H4.35 V8.8 H8.70 V-8.8" fill="none" stroke="#e57373" stroke-width="1.5" stroke-linejoin="miter"/></g>
<g transform="translate(2451 535.7)"><path d="M-3 20.5 V17 C-3 14 -7.3 12 -7.3 7.3 A7.3 7.3 0 1 1 7.3 7.3 C7.3 12 3 14 3 17 V20.5Z" fill="none" stroke="#b0bec5" stroke-width="1.4"/><rect x="-3.2" y="20.6" width="6.4" height="2.6" fill="#a1887f"/></g><g transform="translate(2459.5 532.8)"><path d="M-3 20.5 V17 C-3 14 -7.3 12 -7.3 7.3 A7.3 7.3 0 1 1 7.3 7.3 C7.3 12 3 14 3 17 V20.5Z" fill="none" stroke="#b0bec5" stroke-width="1.4"/><rect x="-3.2" y="20.6" width="6.4" height="2.6" fill="#a1887f"/></g>
<g transform="translate(2481 535.7)"><path d="M-3 20.5 V17 C-3 14 -7.3 12 -7.3 7.3 A7.3 7.3 0 1 1 7.3 7.3 C7.3 12 3 14 3 17 V20.5Z" fill="#a4b4bc"/><rect x="-3.2" y="20.6" width="6.4" height="2.6" fill="#a1887f"/></g><g transform="translate(2490 532.8)"><path d="M-3 20.5 V17 C-3 14 -7.3 12 -7.3 7.3 A7.3 7.3 0 1 1 7.3 7.3 C7.3 12 3 14 3 17 V20.5Z" fill="#b0bec5"/><rect x="-3.2" y="20.6" width="6.4" height="2.6" fill="#a1887f"/></g>
<g transform="translate(2510.4 535.7)"><path d="M-3 20.5 V17 C-3 14 -7.3 12 -7.3 7.3 A7.3 7.3 0 1 1 7.3 7.3 C7.3 12 3 14 3 17 V20.5Z" fill="#f7c21a"/><rect x="-3.2" y="20.6" width="6.4" height="2.6" fill="#a1887f"/></g><g transform="translate(2519.6 532.8)"><path d="M-3 20.5 V17 C-3 14 -7.3 12 -7.3 7.3 A7.3 7.3 0 1 1 7.3 7.3 C7.3 12 3 14 3 17 V20.5Z" fill="#facf1e"/><rect x="-3.2" y="20.6" width="6.4" height="2.6" fill="#a1887f"/></g>
<path d="M2136.7 570.7 L2142.8 576.7 L2136.7 582.7Z" fill="none" stroke="#f2f2f2" stroke-width="1.2"/>
<g transform="translate(2167 576) scale(1.0) rotate(-45)"><path d="M-8.70 8.8 V-8.8 H-4.35 V8.8 H0.00 V-8.8 H4.35 V8.8 H8.70 V-8.8" fill="none" stroke="#e57373" stroke-width="1.5" stroke-linejoin="miter"/></g>
<g transform="translate(2451 565.7)"><path d="M-3 20.5 V17 C-3 14 -7.3 12 -7.3 7.3 A7.3 7.3 0 1 1 7.3 7.3 C7.3 12 3 14 3 17 V20.5Z" fill="none" stroke="#fccc1c" stroke-width="1.4"/><rect x="-3.2" y="20.6" width="6.4" height="2.6" fill="#a1887f"/></g><g transform="translate(2459.5 562.8)"><path d="M-3 20.5 V17 C-3 14 -7.3 12 -7.3 7.3 A7.3 7.3 0 1 1 7.3 7.3 C7.3 12 3 14 3 17 V20.5Z" fill="none" stroke="#fccc1c" stroke-width="1.4"/><rect x="-3.2" y="20.6" width="6.4" height="2.6" fill="#a1887f"/></g>
<g transform="translate(2481 565.7)"><path d="M-3 20.5 V17 C-3 14 -7.3 12 -7.3 7.3 A7.3 7.3 0 1 1 7.3 7.3 C7.3 12 3 14 3 17 V20.5Z" fill="#a4b4bc"/><rect x="-3.2" y="20.6" width="6.4" height="2.6" fill="#a1887f"/></g><g transform="translate(2490 562.8)"><path d="M-3 20.5 V17 C-3 14 -7.3 12 -7.3 7.3 A7.3 7.3 0 1 1 7.3 7.3 C7.3 12 3 14 3 17 V20.5Z" fill="#b0bec5"/><rect x="-3.2" y="20.6" width="6.4" height="2.6" fill="#a1887f"/></g>
<g transform="translate(2510.4 565.7)"><path d="M-3 20.5 V17 C-3 14 -7.3 12 -7.3 7.3 A7.3 7.3 0 1 1 7.3 7.3 C7.3 12 3 14 3 17 V20.5Z" fill="#f7c21a"/><rect x="-3.2" y="20.6" width="6.4" height="2.6" fill="#a1887f"/></g><g transform="translate(2519.6 562.8)"><path d="M-3 20.5 V17 C-3 14 -7.3 12 -7.3 7.3 A7.3 7.3 0 1 1 7.3 7.3 C7.3 12 3 14 3 17 V20.5Z" fill="#facf1e"/><rect x="-3.2" y="20.6" width="6.4" height="2.6" fill="#a1887f"/></g>
<g transform="translate(2101 730) scale(1.0) rotate(-45)"><path d="M-8.70 8.8 V-8.8 H-4.35 V8.8 H0.00 V-8.8 H4.35 V8.8 H8.70 V-8.8" fill="none" stroke="#e57373" stroke-width="1.5" stroke-linejoin="miter"/></g>
<path d="M2467.3 736.7 V729 L2473.5 723 L2476 725.3 V723.5 H2478 V727.3 L2480 729 V736.7Z" fill="#fff"/>
<path d="M2489.5 724.5 H2502 L2495.7 732.5Z M2489 735.3 H2502.5" fill="#fff" stroke="#fff" stroke-width="1.6"/>
<path d="M2511 735.5 H2524 L2517.5 727.5Z M2510.5 724.7 H2524.5" fill="#fff" stroke="#fff" stroke-width="1.6"/>
<path d="M2097 760 H2135 V797.5 H2103 L2097 792Z" fill="#1e78d6"/><rect x="2104" y="760" width="22" height="19" fill="#e6eaee"/><rect x="2108" y="786.5" width="20" height="11" fill="#e6eaee"/><rect x="2112" y="789" width="4" height="7" fill="#1e78d6"/>
<path d="M2117.5 782.5 Q2128 781 2128 765 M2119.3 770.3 L2128 760.5 L2136.7 770.3" fill="none" stroke="#2b2b2b" stroke-width="5.8"/><path d="M2117.5 782.5 Q2128 781 2128 765 M2120.3 769.8 L2128 761.3 L2135.7 769.8" fill="none" stroke="#f2f2f2" stroke-width="2.7"/>
<path d="M2187 793.5 V766.5 M2177 776 L2187 765.5 L2197 776" fill="none" stroke="#f2f2f2" stroke-width="3.2"/>
<path d="M2258 764 V791 M2248 781.5 L2258 792 L2268 781.5" fill="none" stroke="#8e8e8e" stroke-width="3.2"/>
<path d="M2320 768 A9 9.5 0 0 1 2338 768" fill="none" stroke="#ff8a65" stroke-width="2.8"/><rect x="2313" y="767" width="32" height="5.8" fill="#ff8a65"/><path d="M2313.5 774.3 H2344.5 L2341 801 H2317Z" fill="#ff8a65"/>
<g transform="translate(2400 778.5) rotate(44.5)"><rect x="-3.6" y="-23" width="7.2" height="3.6" fill="#f48fb1"/><rect x="-3.6" y="-19.4" width="7.2" height="35.4" fill="#fbdc6e"/><path d="M-3.6 16 L0 25 L3.6 16Z" fill="#eeeeee"/><path d="M-1.1 22.3 L0 25 L1.1 22.3Z" fill="#607d8b"/></g>
<rect x="2455" y="757" width="32" height="44" rx="1.5" fill="#e8eaf6"/><rect x="2458.84" y="760.96" width="24.32" height="7.48" fill="#5c6bc0"/><rect x="2458.84" y="772.84" width="6.40" height="5.72" fill="#9fa8da"/><rect x="2467.80" y="772.84" width="6.40" height="5.72" fill="#9fa8da"/><rect x="2476.76" y="772.84" width="6.40" height="5.72" fill="#9fa8da"/><rect x="2458.84" y="781.64" width="6.40" height="5.72" fill="#9fa8da"/><rect x="2467.80" y="781.64" width="6.40" height="5.72" fill="#9fa8da"/><rect x="2476.76" y="781.64" width="6.40" height="5.72" fill="#9fa8da"/><rect x="2458.84" y="790.44" width="6.40" height="5.72" fill="#9fa8da"/><rect x="2467.80" y="790.44" width="6.40" height="5.72" fill="#9fa8da"/><rect x="2476.76" y="790.44" width="6.40" height="5.72" fill="#9fa8da"/>
<rect x="2101" y="830" width="30" height="35.5" fill="#eceff1"/>
<rect x="2102.5" y="826" width="1.6" height="7.5" fill="#8a8a8a"/><rect x="2106.6" y="826" width="1.6" height="7.5" fill="#8a8a8a"/><rect x="2110.7" y="826" width="1.6" height="7.5" fill="#8a8a8a"/><rect x="2114.8" y="826" width="1.6" height="7.5" fill="#8a8a8a"/><rect x="2118.9" y="826" width="1.6" height="7.5" fill="#8a8a8a"/><rect x="2123.0" y="826" width="1.6" height="7.5" fill="#8a8a8a"/><rect x="2127.1" y="826" width="1.6" height="7.5" fill="#8a8a8a"/>
<path d="M2104 839.5 H2119 M2104 844.7 H2123 M2104 849.7 H2125 M2104 854.7 H2117" stroke="#757575" stroke-width="1.5"/>
<path d="M2168.5 828 Q2168.5 826.5 2170 827 L2208 844.5 Q2209.5 845.7 2208 846.8 L2170 864.7 Q2168.5 865.2 2168.5 863.7Z" fill="#9fa8da"/><path d="M2168.5 828 Q2168.5 826.5 2170 827 L2208 844.5 Q2209 845.2 2208.5 846 H2168.5Z" fill="#e8eaf6"/>
<path d="M2195 827 H2201.6 V853.2 A3.3 3.3 0 0 1 2195 853.2Z" fill="#f2f2f2"/><path d="M2195 830.0 L2198.63 832.2 L2195 834.0Z" fill="#3949ab"/><path d="M2195 837.8333333333334 L2198.63 840.0333333333334 L2195 841.8333333333334Z" fill="#3949ab"/><path d="M2195 845.6666666666666 L2198.63 847.8666666666667 L2195 849.6666666666666Z" fill="#3949ab"/>
<path d="M2236 845.5 L2262 831 L2279.5 848.5 L2258 860Z" fill="#c5cae9"/><path d="M2236 845.5 L2258 860 V863 L2236 849Z" fill="#7986cb"/><path d="M2279.5 848.5 L2258 860 V863 L2279.5 851.5Z" fill="#3f51b5"/><path d="M2236 845.5 L2262 831 L2262 838 L2244 848.5 V851Z" fill="#9fa8da"/><path d="M2244 848.5 L2262 838 V842 L2244 852Z" fill="#3949ab"/>
<rect x="2258.5" y="822" width="9" height="12" fill="#283593"/><path d="M2260 824 H2266 V850.0 A3.0 3.0 0 0 1 2260 850.0Z" fill="#f2f2f2"/><path d="M2260 827.0 L2263.3 829.2 L2260 831.0Z" fill="#7986cb"/><path d="M2260 834.6666666666666 L2263.3 836.8666666666667 L2260 838.6666666666666Z" fill="#7986cb"/><path d="M2260 842.3333333333334 L2263.3 844.5333333333334 L2260 846.3333333333334Z" fill="#7986cb"/><path d="M2257.5 848 A6 4.5 0 0 0 2268.5 848" fill="none" stroke="#7986cb" stroke-width="1.8"/>
<g transform="translate(2329 845.7)"><path d="M-9.5 0 H9.5 M0 -9.5 V9.5 M-9.5 0 l3.3 -3 M-9.5 0 l3.3 3 M9.5 0 l-3.3 -3 M9.5 0 l-3.3 3 M0 -9.5 l-3 3.3 M0 -9.5 l3 3.3 M0 9.5 l-3 -3.3 M0 9.5 l3 -3.3" stroke="#f2f2f2" stroke-width="2" fill="none"/><path d="M1 -16.5 A16.5 16.5 0 0 1 16 -1 M-1 16.5 A16.5 16.5 0 0 1 -16 1" stroke="#f2f2f2" stroke-width="1.5" fill="none"/><path d="M4.5 -19.5 L0 -16.5 L4 -13 M-4.5 19.5 L0 16.5 L-4 13" stroke="#f2f2f2" stroke-width="1.5" fill="none"/></g></svg>
<div class="a" style="left:1587px;top:160px;width:404px;height:64px;border:4px solid #ff0000;background:transparent;"></div>
<div class="a" style="left:2126px;top:502px;width:196px;height:91px;border:4px solid #ff0000;background:transparent;"></div>
</body></html>
